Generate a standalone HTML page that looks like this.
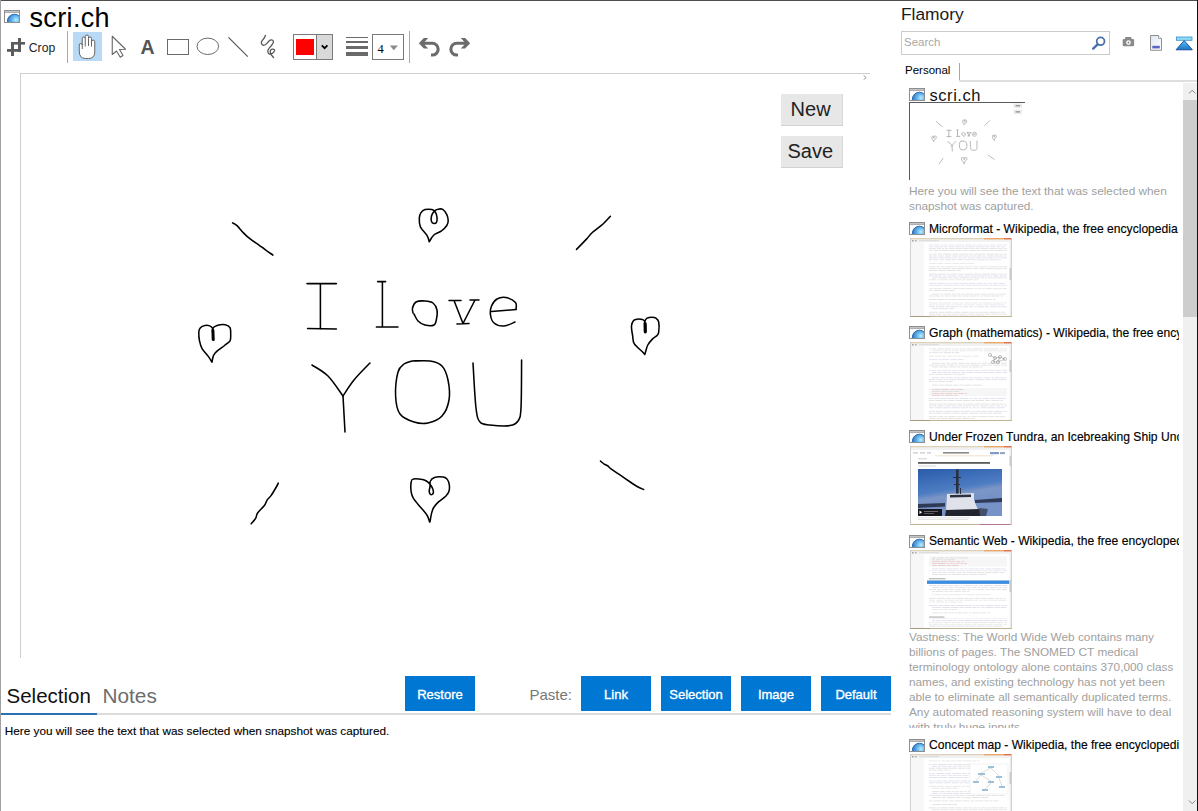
<!DOCTYPE html>
<html><head><meta charset="utf-8">
<style>
html,body{margin:0;padding:0;background:#fff;}
body{width:1198px;height:811px;position:relative;overflow:hidden;font-family:"Liberation Sans",sans-serif;}
.a{position:absolute;}
.t{position:absolute;white-space:nowrap;line-height:1;}
svg{position:absolute;overflow:visible;}
.btn{position:absolute;background:#0077d3;color:#fff;font-weight:normal;font-size:13px;-webkit-text-stroke:0.35px #fff;text-align:center;width:70px;height:35px;line-height:37px;top:676px;box-sizing:border-box;}
.ttl{position:absolute;white-space:nowrap;line-height:1;font-size:12.1px;color:#000;-webkit-text-stroke:0.15px #000;}
.desc{position:absolute;white-space:nowrap;font-size:11.8px;line-height:15px;color:#a0a0a0;}
</style></head><body>

<!-- window borders -->
<div class="a" style="left:0;top:0;width:1198px;height:1px;background:#4e4e4e"></div>
<div class="a" style="left:0;top:0;width:1px;height:811px;background:#a0a0a0"></div>
<div class="a" style="left:1197px;top:0;width:1px;height:811px;background:#111"></div>

<!-- LEFT PANE -->
<div id="left">

<svg width="0" height="0" style="position:absolute">
 <defs>
  <radialGradient id="gg" cx="0.6" cy="0.4" r="0.65">
   <stop offset="0" stop-color="#b8ecff"/><stop offset="0.45" stop-color="#5fb2ec"/><stop offset="1" stop-color="#2a6fc0"/>
  </radialGradient>
  <clipPath id="gclip"><rect x="1" y="3" width="14" height="9"/></clipPath>
  <symbol id="globe" viewBox="0 0 16 13">
   <rect x="0" y="0" width="16" height="13" fill="#fff"/>
   <rect x="0" y="0" width="16" height="3" fill="#a9a9a9"/>
   <rect x="1" y="1" width="14" height="1.2" fill="#c4c4c4"/>
   <g clip-path="url(#gclip)"><circle cx="10.5" cy="11.3" r="7.1" fill="url(#gg)" stroke="#1e5fa6" stroke-width="0.9"/></g>
   <rect x="0.5" y="0.5" width="15" height="12" fill="none" stroke="#8e8e8e" stroke-width="1"/>
  </symbol>
 </defs>
</svg>

<!-- title -->
<svg style="left:4px;top:10px" width="16" height="13"><use href="#globe"/></svg>
<div class="t" style="left:29.5px;top:4.8px;font-size:27px;letter-spacing:0.35px;color:#000">scri.ch</div>

<!-- toolbar -->
<svg style="left:0;top:0" width="1" height="1">
 <g fill="#5c5c5c">
  <rect x="18" y="38" width="3" height="14"/>
  <rect x="11" y="42" width="14" height="2.6"/>
  <rect x="11" y="42" width="3" height="14"/>
  <rect x="7" y="49" width="14" height="2.8"/>
 </g>
</svg>
<div class="t" style="left:28.8px;top:42.3px;font-size:12.2px;color:#222">Crop</div>
<div class="a" style="left:67px;top:31px;width:1px;height:32px;background:#a9a9ad"></div>
<div class="a" style="left:73px;top:32px;width:29px;height:29px;background:#b9daf7"></div>
<svg style="left:73px;top:32px" width="29" height="29">
 <path d="M6.25 19 L6.25 13 A1.5 1.5 0 0 1 9.25 13 L9.25 6.5 A1.5 1.5 0 0 1 12.25 6.5 L12.25 4.6 A1.625 1.625 0 0 1 15.5 4.6 L15.5 6.5 A1.5 1.5 0 0 1 18.5 6.5 L18.5 9.75 A1.625 1.625 0 0 1 21.75 9.75 L21.75 20 Q21.75 26.5 15.5 26.5 L12.5 26.5 Q6.25 26.5 6.25 19 Z" fill="#fff" stroke="#666" stroke-width="1"/>
 <path d="M9.25 12.5 V17 M12.25 6.5 V14.5 M15.5 6.5 V14 M18.5 9.75 V14.5" stroke="#666" stroke-width="1" fill="none"/>
</svg>
<svg style="left:0;top:0" width="1" height="1">
 <path d="M112.25 36.25 L112.25 54.5 L116.5 51 L120.25 57.25 L123 55.5 L119.5 49.5 L125.5 49.25 Z" fill="#fff" stroke="#666" stroke-width="1.1" stroke-linejoin="round"/>
</svg>
<div class="t" style="left:140.5px;top:37.6px;font-size:19.5px;font-weight:bold;color:#555">A</div>
<svg style="left:0;top:0" width="1" height="1">
 <rect x="167.5" y="39.5" width="21" height="15" fill="none" stroke="#6a6a6a" stroke-width="1"/>
 <ellipse cx="207.8" cy="46.3" rx="10.8" ry="8.2" fill="none" stroke="#6a6a6a" stroke-width="1"/>
 <path d="M228.5 37.3 L247.8 56.7" stroke="#555" stroke-width="1.2"/>
 <path d="M265.4 35.3 C265 37.5 262.5 40 261.8 41.2 C260.8 43 261.5 44.8 263.5 45.3 C265.3 45.6 266.5 44.2 269.1 40.9 C270.5 39.6 272.6 39.6 273.4 41.3 C274 42.6 273 44 269.4 47.9 C267.5 50 267.3 52.6 268.8 53.7 C270.5 54.9 273.6 53.2 274.6 50.8 C275 49.4 273.2 48.8 271.6 49.4 C269.8 50.2 269.8 52.5 271.3 54.8 L273.5 57.5" fill="none" stroke="#555" stroke-width="1.3" stroke-linecap="round"/>
</svg>
<!-- color picker -->
<div class="a" style="left:293px;top:34px;width:38px;height:24px;border:1px solid #7a7a7a;background:#fff"></div>
<div class="a" style="left:296px;top:39px;width:18px;height:16px;background:#f00"></div>
<div class="a" style="left:316px;top:35px;width:15px;height:24px;background:#d9d9d9;border-left:1px solid #7a7a7a"></div>
<svg style="left:0;top:0" width="1" height="1">
 <path d="M321.8 45.3 L324.6 48.2 L327.4 45.3" fill="none" stroke="#000" stroke-width="1.8"/>
</svg>
<!-- line width -->
<svg style="left:0;top:0" width="1" height="1">
 <g fill="#6a6a6a">
  <rect x="346" y="37" width="22" height="1"/>
  <rect x="346" y="41" width="22" height="2"/>
  <rect x="346" y="46" width="22" height="3"/>
  <rect x="346" y="52" width="22" height="4"/>
 </g>
</svg>
<div class="a" style="left:372px;top:34px;width:30px;height:24px;border:1px solid #7a7a7a;background:#fff"></div>
<div class="t" style="left:377.5px;top:42.5px;font-size:12.5px;font-family:'Liberation Serif',serif;color:#000">4</div>
<svg style="left:0;top:0" width="1" height="1">
 <path d="M389.8 45.5 L397.9 45.5 L393.85 50.2 Z" fill="#8a8a8a"/>
</svg>
<div class="a" style="left:409px;top:31px;width:1px;height:32px;background:#a9a9ad"></div>
<!-- undo / redo -->
<svg style="left:0;top:0" width="1" height="1">
 <g fill="none" stroke="#6b6b6b" stroke-width="3.1">
  <path d="M423.5 43.3 L432.3 43.3 A5.85 5.85 0 0 1 432.3 55 L431 55"/>
  <path d="M465.5 43.3 L456.7 43.3 A5.85 5.85 0 0 0 456.7 55 L458 55"/>
 </g>
 <g fill="#6b6b6b">
  <path d="M418.8 43.3 L423.9 38.1 L428.2 38.1 L424.6 41.9 L424.6 44.7 L428.2 48.6 L423.9 48.6 Z"/>
  <path d="M470.2 43.3 L465.1 38.1 L460.8 38.1 L464.4 41.9 L464.4 44.7 L460.8 48.6 L465.1 48.6 Z"/>
 </g>
</svg>

<!-- canvas frame -->
<div class="a" style="left:20px;top:73px;width:850px;height:1px;background:#cfcfcf"></div>
<div class="a" style="left:20px;top:73px;width:1px;height:585px;background:#cfcfcf"></div>
<svg style="left:0;top:0" width="1" height="1"><path d="M863.6 75.5 L866.2 77.6 L863.6 79.7" fill="none" stroke="#9a9a9a" stroke-width="1"/></svg>

<div class="a" style="left:781px;top:93.5px;width:62px;height:32px;background:#e7e7e7;border-bottom:1px solid #d2d2d2;border-right:1px solid #d8d8d8;box-sizing:border-box"></div>
<div class="t" style="left:790.6px;top:98.5px;font-size:20px;color:#222">New</div>
<div class="a" style="left:781px;top:135.5px;width:62px;height:32px;background:#e7e7e7;border-bottom:1px solid #d2d2d2;border-right:1px solid #d8d8d8;box-sizing:border-box"></div>
<div class="t" style="left:787.5px;top:141.2px;font-size:20px;color:#222">Save</div>

<svg style="left:0;top:0" width="1" height="1"><g stroke="#000" stroke-width="1.55"><g id="drw" fill="none" stroke-linecap="round" stroke-linejoin="round">
<path d="M232.6 222.9 C233.3 223.3 235.2 223.9 237.0 225.6 C238.8 227.3 241.4 230.8 243.7 233.1 C245.9 235.4 247.9 237.2 250.5 239.2 C253.1 241.2 256.9 243.6 259.3 245.3 C261.7 247.0 262.5 247.7 264.8 249.3 C267.1 250.9 271.5 254.1 272.9 255.1"/>
<path d="M576.5 249.4 C578.2 247.7 584.1 241.7 586.7 238.9 C589.3 236.1 589.4 235.3 592.1 232.8 C594.8 230.3 600.0 226.8 603.0 224.0 C606.0 221.2 609.2 217.5 610.4 216.2"/>
<path d="M251.2 523.8 C251.9 522.9 254.5 520.2 255.6 518.4 C256.7 516.6 256.1 515.1 257.6 513.0 C259.1 510.9 262.8 507.6 264.4 505.5 C266.0 503.4 266.0 501.8 267.1 500.1 C268.2 498.4 269.6 497.7 271.2 495.4 C272.8 493.1 275.4 488.6 276.6 486.5 C277.8 484.4 278.0 483.7 278.3 483.1"/>
<path d="M600.5 461.1 C601.1 461.6 603.0 463.4 604.2 464.2 C605.4 465.0 606.8 465.2 607.9 466.0 C609.0 466.8 609.0 467.4 611.0 468.8 C613.0 470.2 616.5 472.6 619.6 474.7 C622.7 476.8 626.4 479.4 629.5 481.5 C632.6 483.6 635.7 485.7 638.1 487.0 C640.5 488.3 642.8 489.1 643.7 489.5"/>
<path d="M429.2 241.8 C428.9 240.8 428.6 238.2 427.1 235.7 C425.6 233.2 421.7 229.8 420.4 226.9 C419.1 224.0 419.2 220.5 419.3 218.1 C419.4 215.7 420.0 214.0 421.0 212.6 C422.0 211.2 423.3 210.1 425.1 209.6 C426.9 209.1 430.2 209.2 431.9 209.6 C433.6 210.0 434.4 210.7 435.3 212.0 C436.2 213.3 436.8 215.7 437.0 217.4 C437.2 219.1 437.1 221.1 436.6 222.1 C436.1 223.1 434.8 223.6 433.9 223.5 C433.0 223.4 431.9 222.8 431.5 221.5 C431.1 220.2 431.0 217.8 431.5 216.0 C432.0 214.2 433.5 212.0 434.6 210.9 C435.7 209.8 436.6 209.4 438.0 209.2 C439.4 208.9 441.2 208.5 442.7 209.4 C444.2 210.3 445.9 212.8 446.8 214.7 C447.7 216.6 448.2 219.0 448.2 220.8 C448.2 222.6 447.9 223.8 446.8 225.5 C445.7 227.2 443.5 229.4 441.4 231.0 C439.2 232.6 435.9 233.2 433.9 235.0 C431.9 236.8 430.0 240.7 429.2 241.8"/>
<path d="M212.0 362.2 C211.4 361.2 209.9 358.6 208.3 356.4 C206.7 354.2 203.7 351.5 202.2 348.9 C200.7 346.3 200.1 343.6 199.5 340.8 C198.9 338.0 198.7 334.1 198.8 332.0 C198.9 329.9 199.2 329.0 200.2 327.9 C201.2 326.8 203.3 325.8 204.9 325.5 C206.5 325.2 208.4 325.4 209.7 325.9 C211.0 326.4 212.1 327.2 212.7 328.6 C213.3 330.0 213.0 332.1 213.1 334.0 C213.2 335.9 213.4 340.1 213.4 340.1 C213.4 340.1 213.0 335.9 212.9 334.0 C212.8 332.1 212.0 330.0 212.7 328.6 C213.4 327.2 215.0 326.1 217.1 325.5 C219.2 324.9 223.2 324.4 225.3 324.8 C227.5 325.2 229.1 326.0 230.0 327.6 C230.9 329.2 230.7 332.5 230.7 334.7 C230.7 336.9 231.0 339.0 230.0 340.8 C229.0 342.6 226.8 343.7 224.6 345.5 C222.3 347.3 218.4 349.9 216.5 351.6 C214.6 353.3 214.2 353.9 213.4 355.7 C212.7 357.5 212.2 361.1 212.0 362.2"/>
<path d="M644.8 354.5 C644.4 354.1 644.2 353.6 642.4 351.8 C640.6 350.0 635.8 346.4 634.2 343.7 C632.6 341.0 633.1 338.4 632.6 335.5 C632.1 332.6 631.3 328.5 631.5 326.0 C631.7 323.5 632.7 321.7 633.6 320.6 C634.5 319.5 635.5 319.4 637.0 319.2 C638.5 319.0 641.1 319.2 642.4 319.6 C643.7 320.0 644.3 320.6 644.8 321.6 C645.3 322.6 645.3 323.6 645.4 325.4 C645.5 327.1 645.2 332.1 645.1 332.1 C645.0 332.1 645.0 327.1 644.9 325.4 C644.8 323.6 644.4 322.8 644.8 321.6 C645.2 320.4 645.9 318.9 647.1 318.2 C648.3 317.5 650.4 317.2 651.9 317.2 C653.4 317.2 654.9 317.4 656.0 318.2 C657.1 319.0 658.2 319.7 658.7 322.0 C659.2 324.3 659.0 329.9 658.7 332.1 C658.4 334.4 658.0 334.4 657.0 335.5 C656.0 336.6 654.1 337.3 652.6 338.9 C651.1 340.5 648.9 343.0 647.8 345.0 C646.7 347.0 646.3 349.5 645.8 351.1 C645.3 352.7 645.0 353.9 644.8 354.5"/>
<path d="M429.6 521.9 C429.2 520.8 428.7 517.9 427.2 515.5 C425.7 513.1 423.1 510.3 420.8 507.5 C418.5 504.7 415.2 501.2 413.6 498.7 C412.0 496.1 411.6 495.0 411.2 492.2 C410.8 489.4 410.8 484.0 411.2 481.8 C411.6 479.6 411.7 479.4 413.6 479.0 C415.5 478.6 420.3 479.1 422.4 479.4 C424.5 479.7 425.1 480.2 426.4 481.0 C427.7 481.8 429.0 483.0 430.0 484.2 C431.0 485.4 431.9 486.7 432.5 488.2 C433.1 489.7 433.6 491.9 433.3 493.0 C433.0 494.1 431.5 494.9 430.8 494.6 C430.1 494.3 429.3 492.7 429.2 491.4 C429.1 490.1 429.8 488.3 430.0 486.6 C430.2 484.9 429.6 482.5 430.4 481.0 C431.1 479.5 432.4 478.1 434.5 477.4 C436.6 476.7 441.2 476.7 443.3 477.0 C445.4 477.3 446.3 478.1 447.3 479.4 C448.3 480.7 449.0 483.0 449.3 485.0 C449.6 487.0 449.5 489.5 448.9 491.4 C448.3 493.3 447.4 494.4 445.7 496.2 C444.0 497.9 440.5 500.0 438.5 501.9 C436.5 503.8 434.8 505.6 433.7 507.5 C432.6 509.4 432.2 510.7 431.6 513.1 C431.0 515.5 430.3 520.4 430.0 521.9"/>
<path d="M413.0 313.0 C412.9 312.2 412.0 309.8 412.5 308.0 C413.0 306.2 413.9 303.2 416.0 302.0 C418.1 300.8 422.2 300.8 425.0 301.0 C427.8 301.2 431.0 301.5 433.0 303.0 C435.0 304.5 436.4 307.3 437.0 310.0 C437.6 312.7 437.0 316.5 436.5 319.0 C436.0 321.5 435.9 324.0 434.0 325.0 C432.1 326.0 427.7 325.7 425.0 325.0 C422.3 324.3 419.8 322.8 418.0 321.0 C416.2 319.2 414.7 315.2 414.0 314.0"/>
<path d="M516.0 309.5 C515.9 308.3 517.2 304.5 515.5 302.5 C513.8 300.5 509.1 298.1 506.0 297.5 C502.9 296.9 499.4 297.6 497.0 299.0 C494.6 300.4 492.6 303.3 491.5 306.0 C490.4 308.7 490.1 312.2 490.5 315.0 C490.9 317.8 491.8 321.2 494.0 323.0 C496.2 324.8 500.5 326.2 504.0 326.0 C507.5 325.8 513.2 322.7 515.0 322.0"/>
<path d="M312.0 365.0 C314.7 366.8 322.8 370.8 328.0 376.0 C333.2 381.2 340.5 392.7 343.0 396.0"/>
<path d="M370.0 363.0 C367.3 365.8 358.5 374.5 354.0 380.0 C349.5 385.5 344.8 393.3 343.0 396.0"/>
<path d="M412.0 361.0 C415.0 361.0 425.0 360.2 430.0 361.0 C435.0 361.8 439.0 362.8 442.0 366.0 C445.0 369.2 446.8 374.3 448.0 380.0 C449.2 385.7 450.0 394.0 449.0 400.0 C448.0 406.0 445.5 412.2 442.0 416.0 C438.5 419.8 432.7 422.0 428.0 423.0 C423.3 424.0 418.7 423.5 414.0 422.0 C409.3 420.5 403.1 418.3 400.0 414.0 C396.9 409.7 395.9 403.0 395.6 396.0 C395.3 389.0 396.6 377.3 398.0 372.0 C399.4 366.7 401.7 365.8 404.0 364.0 C406.3 362.2 410.7 361.5 412.0 361.0"/>
<path d="M473.0 363.0 C473.5 370.5 474.8 398.2 476.0 408.0 C477.2 417.8 477.7 419.2 480.0 422.0 C482.3 424.8 485.0 424.4 490.0 425.0 C495.0 425.6 505.3 426.3 510.0 425.6 C514.7 424.9 516.2 423.9 518.0 421.0 C519.8 418.1 520.4 418.2 521.0 408.0 C521.6 397.8 521.5 368.0 521.6 360.0"/>
<path d="M343 396 L345 432"/>
<path d="M212.9 330.5 L213.2 339.5" stroke-width="3"/>
<path d="M645.1 323.5 L645.3 331.8" stroke-width="3.2"/>
<path d="M491.5 311.5 L516 309.5"/>
<path d="M307 283.6 L336.4 283.6 M320.4 283.6 L320.4 329 M307.6 328.5 L336.4 329"/>
<path d="M377.6 281.6 L385.6 281.6 M382.4 281.6 L382.4 327 M376.4 327 L398 327"/>
<path d="M449 300.5 L461 300.5 M470 300 L479 300 M454 300.5 L463 323.5 L475 300 M457 324 L469 323.5"/>
</g></g></svg>

<!-- bottom tabs -->
<div class="t" style="left:6.5px;top:686px;font-size:20.5px;color:#111">Selection</div>
<div class="t" style="left:102.5px;top:685.6px;font-size:20.8px;color:#6d6d6d">Notes</div>
<div class="a" style="left:1px;top:713px;width:890px;height:2px;background:#dcdcdc"></div>
<div class="a" style="left:1px;top:713px;width:96px;height:2px;background:#2b72b4"></div>
<div class="btn" style="left:405px">Restore</div>
<div class="t" style="left:529.5px;top:686.5px;font-size:15px;color:#777">Paste:</div>
<div class="btn" style="left:581px">Link</div>
<div class="btn" style="left:661px">Selection</div>
<div class="btn" style="left:741px">Image</div>
<div class="btn" style="left:821px">Default</div>
<div class="t" style="left:4.8px;top:724.6px;font-size:11.78px;color:#000;-webkit-text-stroke:0.12px #000">Here you will see the text that was selected when snapshot was captured.</div>

</div>

<!-- RIGHT PANE -->
<div id="right">
<div class="t" style="left:900.9px;top:6px;font-size:17.4px;color:#1a1a1a">Flamory</div>
<div class="a" style="left:901px;top:31px;width:209px;height:24px;border:1px solid #cbcbcb;box-sizing:border-box"></div>
<div class="t" style="left:904px;top:36.8px;font-size:11.5px;color:#a8a8a8">Search</div>
<svg style="left:0;top:0" width="1" height="1">
 <circle cx="1100.6" cy="41.3" r="3.9" fill="none" stroke="#4a70ad" stroke-width="1.8"/>
 <path d="M1097.6 44.4 L1093.2 48.6" stroke="#4a70ad" stroke-width="2.4" stroke-linecap="round"/>
 <g fill="#8a8a8a">
  <rect x="1122.7" y="39" width="11.4" height="7.2" rx="1.2"/>
  <rect x="1125" y="37" width="6.5" height="3" rx="0.8"/>
 </g>
 <circle cx="1128.5" cy="42.6" r="2.3" fill="#fff"/>
 <path d="M1127.3 42.6 H1129.7 M1128.5 41.4 V43.8" stroke="#8a8a8a" stroke-width="0.8"/>
 <defs><linearGradient id="dg" x1="0" y1="0" x2="1" y2="1"><stop offset="0" stop-color="#dfe6ee"/><stop offset="1" stop-color="#ffffff"/></linearGradient>
 <linearGradient id="tg" x1="0" y1="0" x2="0" y2="1"><stop offset="0" stop-color="#5cc0f2"/><stop offset="1" stop-color="#1a74c8"/></linearGradient></defs>
 <path d="M1150.5 35.5 H1158.5 L1161.5 38.5 V50.3 H1150.5 Z" fill="url(#dg)" stroke="#8f8f8f" stroke-width="1"/>
 <path d="M1158.5 35.5 V38.5 H1161.5" fill="#fff" stroke="#8f8f8f" stroke-width="0.8"/>
 <rect x="1152.3" y="45.8" width="7.5" height="2.6" fill="#5a64c4"/>
 <rect x="1176.5" y="37" width="15.5" height="3.3" fill="#8fdaf5" stroke="#3a8fd0" stroke-width="0.8"/>
 <path d="M1184.2 40.6 L1192.3 49.8 L1176 49.8 Z" fill="url(#tg)" stroke="#10489a" stroke-width="0.9" stroke-linejoin="round"/>
</svg>
<div class="t" style="left:905px;top:64.9px;font-size:11.5px;color:#000">Personal</div>
<div class="a" style="left:959px;top:63px;width:1px;height:18px;background:#a8a8a8"></div>
<div class="a" style="left:959px;top:80px;width:238px;height:2px;background:#dedede"></div>
<div class="a" style="left:1183px;top:83px;width:14px;height:728px;background:#f0f0f0"></div>
<div class="a" style="left:1183px;top:100px;width:14px;height:217px;background:#cdcdcd"></div>
<svg style="left:0;top:0" width="1" height="1">
 <path d="M1189 93.5 L1192.2 90.2 L1195.4 93.5" fill="none" stroke="#8a8a8a" stroke-width="1"/>
 <path d="M1189 800.5 L1192.2 803.8 L1195.4 800.5" fill="none" stroke="#8a8a8a" stroke-width="1"/>
</svg>
<div class="a" style="left:895px;top:83px;width:284px;height:728px;overflow:hidden"><div class="a" style="left:-895px;top:-83px;width:1198px;height:811px"><svg style="left:909px;top:88px" width="16" height="13"><use href="#globe"/></svg>
<div class="t" style="left:929.5px;top:86.8px;font-size:16.5px;letter-spacing:0.55px;color:#111">scri.ch</div>
<div class="a" style="left:909px;top:102px;width:116px;height:1px;background:#5a5a5a"></div>
<div class="a" style="left:909px;top:102px;width:1px;height:78px;background:#5a5a5a"></div>
<svg style="left:0;top:0" width="1" height="1">
 <g transform="translate(904 90.6) scale(0.14)"><use href="#drw" stroke="#adadad" stroke-width="6.5"/></g>
 <rect x="1013.5" y="103.5" width="8.5" height="4.5" fill="#ececec"/><rect x="1013.5" y="109.6" width="8.5" height="4.5" fill="#ececec"/>
 <path d="M1015.5 105.8 H1020 M1015.5 111.9 H1020" stroke="#777" stroke-width="1"/>
</svg>
<div class="desc" style="left:909px;top:184.2px">Here you will see the text that was selected when<br>snapshot was captured.</div>
<svg style="left:909px;top:222px" width="16" height="13"><use href="#globe"/></svg>
<div class="ttl" style="left:929px;top:222.6px">Microformat - Wikipedia, the free encyclopedia</div>
<svg style="left:909px;top:326px" width="16" height="13"><use href="#globe"/></svg>
<div class="ttl" style="left:929px;top:326.6px">Graph (mathematics) - Wikipedia, the free encyclopedia</div>
<svg style="left:909px;top:430px" width="16" height="13"><use href="#globe"/></svg>
<div class="ttl" style="left:929px;top:430.6px">Under Frozen Tundra, an Icebreaking Ship Uncovers its Makers</div>
<svg style="left:909px;top:534.5px" width="16" height="13"><use href="#globe"/></svg>
<div class="ttl" style="left:929px;top:535.1px">Semantic Web - Wikipedia, the free encyclopedia</div>
<svg style="left:909px;top:738.6px" width="16" height="13"><use href="#globe"/></svg>
<div class="ttl" style="left:929px;top:739.2px">Concept map - Wikipedia, the free encyclopedia</div>
<svg style="left:910px;top:237.5px" width="102" height="79" viewBox="0 0 102 79"><rect x="0" y="0" width="102" height="79" fill="#ffffff"/><rect x="0" y="0" width="102" height="1.6" fill="#dcd2bc"/><rect x="74" y="0" width="28" height="1.6" fill="#eaa868"/><rect x="94" y="0" width="8" height="1.6" fill="#e07050"/><rect x="0" y="1.6" width="102" height="2.4" fill="#f1f1f1"/><rect x="2" y="2.2" width="1.5" height="1.2" fill="#888"/><rect x="5" y="2.2" width="1.5" height="1.2" fill="#999"/><rect x="9" y="2.5" width="20" height="0.6" fill="#ccc"/><rect x="0" y="4" width="14" height="75" fill="#f7f7f7"/><rect x="19.0" y="6.5" width="3.3" height="0.8" fill="#e3e3e3"/><rect x="23.2" y="6.5" width="6.4" height="0.8" fill="#e3e3e3"/><rect x="30.7" y="6.5" width="2.7" height="0.8" fill="#e3e3e3"/><rect x="34.1" y="6.5" width="2.6" height="0.8" fill="#e3e3e3"/><rect x="37.8" y="6.5" width="6.9" height="0.8" fill="#e3e3e3"/><rect x="45.3" y="6.5" width="8.9" height="0.8" fill="#e3e3e3"/><rect x="55.4" y="6.5" width="6.6" height="0.8" fill="#e3e3e3"/><rect x="62.9" y="6.5" width="3.1" height="0.8" fill="#e3e3e3"/><rect x="66.6" y="6.5" width="5.7" height="0.8" fill="#e3e3e3"/><rect x="73.0" y="6.5" width="3.3" height="0.8" fill="#e3e3e3"/><rect x="77.0" y="6.5" width="2.2" height="0.8" fill="#e3e3e3"/><rect x="80.1" y="6.5" width="5.1" height="0.8" fill="#e3e3e3"/><rect x="86.3" y="6.5" width="5.6" height="0.8" fill="#e3e3e3"/><rect x="92.9" y="6.5" width="4.1" height="0.8" fill="#e3e3e3"/><rect x="19.0" y="8.4" width="4.8" height="0.8" fill="#d9ddec"/><rect x="24.8" y="8.4" width="8.5" height="0.8" fill="#d9ddec"/><rect x="33.9" y="8.4" width="3.8" height="0.8" fill="#d9ddec"/><rect x="38.8" y="8.4" width="5.6" height="0.8" fill="#d9ddec"/><rect x="45.0" y="8.4" width="5.9" height="0.8" fill="#d9ddec"/><rect x="51.6" y="8.4" width="2.8" height="0.8" fill="#d9ddec"/><rect x="55.1" y="8.4" width="2.5" height="0.8" fill="#d9ddec"/><rect x="58.2" y="8.4" width="6.8" height="0.8" fill="#d9ddec"/><rect x="65.7" y="8.4" width="8.5" height="0.8" fill="#d9ddec"/><rect x="74.8" y="8.4" width="4.6" height="0.8" fill="#d9ddec"/><rect x="80.5" y="8.4" width="4.9" height="0.8" fill="#d9ddec"/><rect x="86.4" y="8.4" width="3.4" height="0.8" fill="#d9ddec"/><rect x="90.8" y="8.4" width="4.4" height="0.8" fill="#d9ddec"/><rect x="19.0" y="10.3" width="7.3" height="0.8" fill="#dcdcdc"/><rect x="27.0" y="10.3" width="3.7" height="0.8" fill="#dcdcdc"/><rect x="31.4" y="10.3" width="2.4" height="0.8" fill="#dcdcdc"/><rect x="34.9" y="10.3" width="3.2" height="0.8" fill="#dcdcdc"/><rect x="39.0" y="10.3" width="5.1" height="0.8" fill="#dcdcdc"/><rect x="44.9" y="10.3" width="7.1" height="0.8" fill="#dcdcdc"/><rect x="52.7" y="10.3" width="6.5" height="0.8" fill="#dcdcdc"/><rect x="59.9" y="10.3" width="4.9" height="0.8" fill="#dcdcdc"/><rect x="65.5" y="10.3" width="3.9" height="0.8" fill="#dcdcdc"/><rect x="70.6" y="10.3" width="7.6" height="0.8" fill="#dcdcdc"/><rect x="79.0" y="10.3" width="8.2" height="0.8" fill="#dcdcdc"/><rect x="87.9" y="10.3" width="4.8" height="0.8" fill="#dcdcdc"/><rect x="93.8" y="10.3" width="3.2" height="0.8" fill="#dcdcdc"/><rect x="19.0" y="12.2" width="3.8" height="0.8" fill="#dcdcdc"/><rect x="23.9" y="12.2" width="4.3" height="0.8" fill="#dcdcdc"/><rect x="29.0" y="12.2" width="2.5" height="0.8" fill="#dcdcdc"/><rect x="32.1" y="12.2" width="6.1" height="0.8" fill="#dcdcdc"/><rect x="38.9" y="12.2" width="6.2" height="0.8" fill="#dcdcdc"/><rect x="46.0" y="12.2" width="5.2" height="0.8" fill="#dcdcdc"/><rect x="52.3" y="12.2" width="5.4" height="0.8" fill="#dcdcdc"/><rect x="58.7" y="12.2" width="8.1" height="0.8" fill="#dcdcdc"/><rect x="67.4" y="12.2" width="3.1" height="0.8" fill="#dcdcdc"/><rect x="71.7" y="12.2" width="7.7" height="0.8" fill="#dcdcdc"/><rect x="80.1" y="12.2" width="3.3" height="0.8" fill="#dcdcdc"/><rect x="84.5" y="12.2" width="8.6" height="0.8" fill="#dcdcdc"/><rect x="93.8" y="12.2" width="2.6" height="0.8" fill="#dcdcdc"/><rect x="19.0" y="15.7" width="2.8" height="0.8" fill="#dedede"/><rect x="22.7" y="15.7" width="3.8" height="0.8" fill="#dedede"/><rect x="27.5" y="15.7" width="4.7" height="0.8" fill="#dedede"/><rect x="33.1" y="15.7" width="8.3" height="0.8" fill="#dedede"/><rect x="42.3" y="15.7" width="5.6" height="0.8" fill="#dedede"/><rect x="49.1" y="15.7" width="8.8" height="0.8" fill="#dedede"/><rect x="58.6" y="15.7" width="5.4" height="0.8" fill="#dedede"/><rect x="65.0" y="15.7" width="6.3" height="0.8" fill="#dedede"/><rect x="71.9" y="15.7" width="3.5" height="0.8" fill="#dedede"/><rect x="76.6" y="15.7" width="7.2" height="0.8" fill="#dedede"/><rect x="84.5" y="15.7" width="4.9" height="0.8" fill="#dedede"/><rect x="90.1" y="15.7" width="2.3" height="0.8" fill="#dedede"/><rect x="93.2" y="15.7" width="3.8" height="0.8" fill="#dedede"/><rect x="19.0" y="17.6" width="3.0" height="0.8" fill="#d9ddec"/><rect x="22.8" y="17.6" width="4.3" height="0.8" fill="#d9ddec"/><rect x="28.2" y="17.6" width="5.7" height="0.8" fill="#d9ddec"/><rect x="35.0" y="17.6" width="6.1" height="0.8" fill="#d9ddec"/><rect x="42.3" y="17.6" width="5.3" height="0.8" fill="#d9ddec"/><rect x="48.4" y="17.6" width="4.2" height="0.8" fill="#d9ddec"/><rect x="53.2" y="17.6" width="6.2" height="0.8" fill="#d9ddec"/><rect x="60.1" y="17.6" width="2.5" height="0.8" fill="#d9ddec"/><rect x="63.3" y="17.6" width="3.0" height="0.8" fill="#d9ddec"/><rect x="66.9" y="17.6" width="5.2" height="0.8" fill="#d9ddec"/><rect x="72.9" y="17.6" width="2.3" height="0.8" fill="#d9ddec"/><rect x="76.4" y="17.6" width="7.2" height="0.8" fill="#d9ddec"/><rect x="84.2" y="17.6" width="8.7" height="0.8" fill="#d9ddec"/><rect x="93.8" y="17.6" width="2.6" height="0.8" fill="#d9ddec"/><rect x="19.0" y="19.5" width="8.6" height="0.8" fill="#dcdcdc"/><rect x="28.2" y="19.5" width="5.5" height="0.8" fill="#dcdcdc"/><rect x="34.3" y="19.5" width="6.6" height="0.8" fill="#dcdcdc"/><rect x="41.8" y="19.5" width="2.1" height="0.8" fill="#dcdcdc"/><rect x="44.5" y="19.5" width="2.6" height="0.8" fill="#dcdcdc"/><rect x="47.8" y="19.5" width="3.8" height="0.8" fill="#dcdcdc"/><rect x="52.5" y="19.5" width="4.3" height="0.8" fill="#dcdcdc"/><rect x="58.0" y="19.5" width="6.9" height="0.8" fill="#dcdcdc"/><rect x="65.7" y="19.5" width="5.2" height="0.8" fill="#dcdcdc"/><rect x="71.9" y="19.5" width="5.6" height="0.8" fill="#dcdcdc"/><rect x="78.4" y="19.5" width="4.2" height="0.8" fill="#dcdcdc"/><rect x="83.2" y="19.5" width="2.2" height="0.8" fill="#dcdcdc"/><rect x="86.5" y="19.5" width="2.8" height="0.8" fill="#dcdcdc"/><rect x="90.4" y="19.5" width="6.6" height="0.8" fill="#dcdcdc"/><rect x="19.0" y="21.4" width="3.0" height="0.8" fill="#d9ddec"/><rect x="23.0" y="21.4" width="5.6" height="0.8" fill="#d9ddec"/><rect x="29.7" y="21.4" width="4.4" height="0.8" fill="#d9ddec"/><rect x="35.2" y="21.4" width="5.5" height="0.8" fill="#d9ddec"/><rect x="41.4" y="21.4" width="4.8" height="0.8" fill="#d9ddec"/><rect x="47.0" y="21.4" width="6.4" height="0.8" fill="#d9ddec"/><rect x="54.5" y="21.4" width="7.3" height="0.8" fill="#d9ddec"/><rect x="62.5" y="21.4" width="3.5" height="0.8" fill="#d9ddec"/><rect x="66.8" y="21.4" width="8.4" height="0.8" fill="#d9ddec"/><rect x="75.9" y="21.4" width="2.9" height="0.8" fill="#d9ddec"/><rect x="79.7" y="21.4" width="8.3" height="0.8" fill="#d9ddec"/><rect x="88.6" y="21.4" width="2.4" height="0.8" fill="#d9ddec"/><rect x="19.0" y="24.9" width="7.8" height="0.8" fill="#e3e3e3"/><rect x="27.6" y="24.9" width="5.6" height="0.8" fill="#e3e3e3"/><rect x="34.3" y="24.9" width="7.0" height="0.8" fill="#e3e3e3"/><rect x="42.4" y="24.9" width="6.4" height="0.8" fill="#e3e3e3"/><rect x="49.6" y="24.9" width="7.8" height="0.8" fill="#e3e3e3"/><rect x="58.1" y="24.9" width="6.3" height="0.8" fill="#e3e3e3"/><rect x="19.0" y="28.4" width="6.5" height="0.8" fill="#dedede"/><rect x="26.3" y="28.4" width="3.3" height="0.8" fill="#dedede"/><rect x="30.7" y="28.4" width="3.9" height="0.8" fill="#dedede"/><rect x="35.7" y="28.4" width="7.6" height="0.8" fill="#dedede"/><rect x="44.4" y="28.4" width="2.8" height="0.8" fill="#dedede"/><rect x="47.9" y="28.4" width="5.7" height="0.8" fill="#dedede"/><rect x="54.6" y="28.4" width="4.6" height="0.8" fill="#dedede"/><rect x="59.9" y="28.4" width="3.4" height="0.8" fill="#dedede"/><rect x="64.3" y="28.4" width="3.8" height="0.8" fill="#dedede"/><rect x="69.2" y="28.4" width="7.3" height="0.8" fill="#dedede"/><rect x="77.4" y="28.4" width="2.3" height="0.8" fill="#dedede"/><rect x="80.4" y="28.4" width="7.5" height="0.8" fill="#dedede"/><rect x="88.7" y="28.4" width="8.3" height="0.8" fill="#dedede"/><rect x="19.0" y="30.3" width="7.9" height="0.8" fill="#dcdcdc"/><rect x="28.0" y="30.3" width="3.6" height="0.8" fill="#dcdcdc"/><rect x="32.4" y="30.3" width="8.2" height="0.8" fill="#dcdcdc"/><rect x="41.5" y="30.3" width="5.2" height="0.8" fill="#dcdcdc"/><rect x="47.3" y="30.3" width="8.2" height="0.8" fill="#dcdcdc"/><rect x="56.1" y="30.3" width="5.9" height="0.8" fill="#dcdcdc"/><rect x="63.0" y="30.3" width="5.5" height="0.8" fill="#dcdcdc"/><rect x="69.6" y="30.3" width="4.4" height="0.8" fill="#dcdcdc"/><rect x="74.8" y="30.3" width="8.9" height="0.8" fill="#dcdcdc"/><rect x="84.3" y="30.3" width="8.1" height="0.8" fill="#dcdcdc"/><rect x="93.5" y="30.3" width="3.5" height="0.8" fill="#dcdcdc"/><rect x="19.0" y="32.2" width="8.8" height="0.8" fill="#dedede"/><rect x="28.8" y="32.2" width="7.5" height="0.8" fill="#dedede"/><rect x="37.1" y="32.2" width="8.4" height="0.8" fill="#dedede"/><rect x="46.6" y="32.2" width="4.4" height="0.8" fill="#dedede"/><rect x="19.0" y="35.7" width="8.4" height="0.8" fill="#dcdcdc"/><rect x="28.2" y="35.7" width="8.1" height="0.8" fill="#dcdcdc"/><rect x="37.1" y="35.7" width="2.2" height="0.8" fill="#dcdcdc"/><rect x="40.3" y="35.7" width="6.8" height="0.8" fill="#dcdcdc"/><rect x="48.2" y="35.7" width="5.3" height="0.8" fill="#dcdcdc"/><rect x="54.7" y="35.7" width="8.3" height="0.8" fill="#dcdcdc"/><rect x="63.9" y="35.7" width="6.7" height="0.8" fill="#dcdcdc"/><rect x="71.5" y="35.7" width="8.2" height="0.8" fill="#dcdcdc"/><rect x="80.6" y="35.7" width="6.8" height="0.8" fill="#dcdcdc"/><rect x="88.5" y="35.7" width="5.1" height="0.8" fill="#dcdcdc"/><rect x="94.5" y="35.7" width="2.5" height="0.8" fill="#dcdcdc"/><rect x="19.0" y="37.6" width="4.2" height="0.8" fill="#d9ddec"/><rect x="24.0" y="37.6" width="7.9" height="0.8" fill="#d9ddec"/><rect x="33.1" y="37.6" width="3.5" height="0.8" fill="#d9ddec"/><rect x="37.6" y="37.6" width="8.8" height="0.8" fill="#d9ddec"/><rect x="47.3" y="37.6" width="6.0" height="0.8" fill="#d9ddec"/><rect x="54.1" y="37.6" width="5.8" height="0.8" fill="#d9ddec"/><rect x="60.7" y="37.6" width="6.2" height="0.8" fill="#d9ddec"/><rect x="67.6" y="37.6" width="8.8" height="0.8" fill="#d9ddec"/><rect x="77.3" y="37.6" width="4.8" height="0.8" fill="#d9ddec"/><rect x="83.1" y="37.6" width="5.9" height="0.8" fill="#d9ddec"/><rect x="90.0" y="37.6" width="6.8" height="0.8" fill="#d9ddec"/><rect x="22.0" y="39.5" width="4.9" height="0.8" fill="#dcdcdc"/><rect x="28.1" y="39.5" width="8.5" height="0.8" fill="#dcdcdc"/><rect x="37.3" y="39.5" width="5.3" height="0.8" fill="#dcdcdc"/><rect x="43.3" y="39.5" width="5.0" height="0.8" fill="#dcdcdc"/><rect x="49.4" y="39.5" width="8.3" height="0.8" fill="#dcdcdc"/><rect x="58.6" y="39.5" width="4.2" height="0.8" fill="#dcdcdc"/><rect x="63.5" y="39.5" width="6.3" height="0.8" fill="#dcdcdc"/><rect x="71.0" y="39.5" width="2.9" height="0.8" fill="#dcdcdc"/><rect x="75.0" y="39.5" width="2.2" height="0.8" fill="#dcdcdc"/><rect x="77.9" y="39.5" width="3.6" height="0.8" fill="#dcdcdc"/><rect x="82.5" y="39.5" width="4.3" height="0.8" fill="#dcdcdc"/><rect x="87.5" y="39.5" width="6.3" height="0.8" fill="#dcdcdc"/><rect x="94.5" y="39.5" width="2.5" height="0.8" fill="#dcdcdc"/><rect x="19.0" y="41.4" width="6.9" height="0.8" fill="#e3e3e3"/><rect x="27.0" y="41.4" width="2.2" height="0.8" fill="#e3e3e3"/><rect x="30.2" y="41.4" width="7.8" height="0.8" fill="#e3e3e3"/><rect x="38.9" y="41.4" width="5.8" height="0.8" fill="#e3e3e3"/><rect x="45.8" y="41.4" width="5.7" height="0.8" fill="#e3e3e3"/><rect x="52.3" y="41.4" width="3.5" height="0.8" fill="#e3e3e3"/><rect x="56.7" y="41.4" width="6.1" height="0.8" fill="#e3e3e3"/><rect x="63.5" y="41.4" width="5.1" height="0.8" fill="#e3e3e3"/><rect x="19.0" y="44.9" width="8.2" height="0.8" fill="#d9ddec"/><rect x="28.0" y="44.9" width="7.4" height="0.8" fill="#d9ddec"/><rect x="36.1" y="44.9" width="2.7" height="0.8" fill="#d9ddec"/><rect x="39.9" y="44.9" width="2.9" height="0.8" fill="#d9ddec"/><rect x="43.5" y="44.9" width="4.7" height="0.8" fill="#d9ddec"/><rect x="49.1" y="44.9" width="8.6" height="0.8" fill="#d9ddec"/><rect x="58.6" y="44.9" width="6.9" height="0.8" fill="#d9ddec"/><rect x="66.3" y="44.9" width="6.4" height="0.8" fill="#d9ddec"/><rect x="73.7" y="44.9" width="2.7" height="0.8" fill="#d9ddec"/><rect x="77.3" y="44.9" width="4.5" height="0.8" fill="#d9ddec"/><rect x="82.9" y="44.9" width="4.5" height="0.8" fill="#d9ddec"/><rect x="88.5" y="44.9" width="6.4" height="0.8" fill="#d9ddec"/><rect x="19.0" y="46.8" width="5.4" height="0.8" fill="#dedede"/><rect x="25.0" y="46.8" width="7.3" height="0.8" fill="#dedede"/><rect x="33.3" y="46.8" width="8.3" height="0.8" fill="#dedede"/><rect x="42.5" y="46.8" width="3.3" height="0.8" fill="#dedede"/><rect x="46.5" y="46.8" width="3.2" height="0.8" fill="#dedede"/><rect x="50.4" y="46.8" width="4.0" height="0.8" fill="#dedede"/><rect x="55.4" y="46.8" width="6.1" height="0.8" fill="#dedede"/><rect x="62.1" y="46.8" width="6.8" height="0.8" fill="#dedede"/><rect x="69.6" y="46.8" width="2.7" height="0.8" fill="#dedede"/><rect x="73.1" y="46.8" width="5.0" height="0.8" fill="#dedede"/><rect x="78.9" y="46.8" width="3.5" height="0.8" fill="#dedede"/><rect x="83.2" y="46.8" width="6.4" height="0.8" fill="#dedede"/><rect x="90.2" y="46.8" width="3.4" height="0.8" fill="#dedede"/><rect x="94.5" y="46.8" width="2.5" height="0.8" fill="#dedede"/><rect x="19.0" y="50.3" width="4.3" height="0.8" fill="#dedede"/><rect x="23.9" y="50.3" width="7.9" height="0.8" fill="#dedede"/><rect x="32.9" y="50.3" width="8.4" height="0.8" fill="#dedede"/><rect x="42.5" y="50.3" width="6.0" height="0.8" fill="#dedede"/><rect x="49.2" y="50.3" width="6.1" height="0.8" fill="#dedede"/><rect x="56.1" y="50.3" width="7.3" height="0.8" fill="#dedede"/><rect x="64.2" y="50.3" width="2.8" height="0.8" fill="#dedede"/><rect x="68.0" y="50.3" width="3.1" height="0.8" fill="#dedede"/><rect x="72.3" y="50.3" width="2.9" height="0.8" fill="#dedede"/><rect x="76.0" y="50.3" width="5.8" height="0.8" fill="#dedede"/><rect x="82.6" y="50.3" width="5.0" height="0.8" fill="#dedede"/><rect x="88.4" y="50.3" width="3.4" height="0.8" fill="#dedede"/><rect x="92.5" y="50.3" width="4.5" height="0.8" fill="#dedede"/><rect x="19.0" y="52.2" width="3.6" height="0.8" fill="#dedede"/><rect x="23.8" y="52.2" width="6.7" height="0.8" fill="#dedede"/><rect x="31.3" y="52.2" width="6.6" height="0.8" fill="#dedede"/><rect x="38.8" y="52.2" width="5.7" height="0.8" fill="#dedede"/><rect x="22.0" y="55.7" width="7.3" height="0.8" fill="#dedede"/><rect x="30.5" y="55.7" width="2.2" height="0.8" fill="#dedede"/><rect x="33.6" y="55.7" width="7.2" height="0.8" fill="#dedede"/><rect x="41.6" y="55.7" width="4.8" height="0.8" fill="#dedede"/><rect x="47.0" y="55.7" width="3.4" height="0.8" fill="#dedede"/><rect x="51.2" y="55.7" width="2.7" height="0.8" fill="#dedede"/><rect x="54.6" y="55.7" width="8.3" height="0.8" fill="#dedede"/><rect x="63.9" y="55.7" width="5.6" height="0.8" fill="#dedede"/><rect x="70.7" y="55.7" width="6.0" height="0.8" fill="#dedede"/><rect x="77.8" y="55.7" width="6.5" height="0.8" fill="#dedede"/><rect x="85.4" y="55.7" width="2.5" height="0.8" fill="#dedede"/><rect x="88.9" y="55.7" width="7.3" height="0.8" fill="#dedede"/><rect x="19.0" y="57.6" width="5.3" height="0.8" fill="#dcdcdc"/><rect x="25.0" y="57.6" width="5.5" height="0.8" fill="#dcdcdc"/><rect x="31.4" y="57.6" width="2.4" height="0.8" fill="#dcdcdc"/><rect x="35.0" y="57.6" width="4.9" height="0.8" fill="#dcdcdc"/><rect x="40.9" y="57.6" width="6.2" height="0.8" fill="#dcdcdc"/><rect x="47.9" y="57.6" width="4.0" height="0.8" fill="#dcdcdc"/><rect x="52.9" y="57.6" width="5.9" height="0.8" fill="#dcdcdc"/><rect x="59.6" y="57.6" width="7.0" height="0.8" fill="#dcdcdc"/><rect x="67.4" y="57.6" width="2.1" height="0.8" fill="#dcdcdc"/><rect x="70.2" y="57.6" width="2.3" height="0.8" fill="#dcdcdc"/><rect x="73.2" y="57.6" width="7.3" height="0.8" fill="#dcdcdc"/><rect x="81.3" y="57.6" width="8.3" height="0.8" fill="#dcdcdc"/><rect x="90.6" y="57.6" width="2.3" height="0.8" fill="#dcdcdc"/><rect x="19.0" y="61.1" width="7.0" height="0.8" fill="#dcdcdc"/><rect x="26.8" y="61.1" width="7.3" height="0.8" fill="#dcdcdc"/><rect x="34.7" y="61.1" width="2.7" height="0.8" fill="#dcdcdc"/><rect x="38.5" y="61.1" width="8.4" height="0.8" fill="#dcdcdc"/><rect x="47.5" y="61.1" width="8.7" height="0.8" fill="#dcdcdc"/><rect x="57.0" y="61.1" width="6.9" height="0.8" fill="#dcdcdc"/><rect x="64.6" y="61.1" width="4.9" height="0.8" fill="#dcdcdc"/><rect x="70.2" y="61.1" width="8.0" height="0.8" fill="#dcdcdc"/><rect x="79.0" y="61.1" width="3.1" height="0.8" fill="#dcdcdc"/><rect x="82.9" y="61.1" width="2.4" height="0.8" fill="#dcdcdc"/><rect x="19.0" y="64.6" width="8.7" height="0.8" fill="#e3e3e3"/><rect x="28.7" y="64.6" width="3.7" height="0.8" fill="#e3e3e3"/><rect x="33.0" y="64.6" width="8.2" height="0.8" fill="#e3e3e3"/><rect x="42.4" y="64.6" width="6.4" height="0.8" fill="#e3e3e3"/><rect x="49.6" y="64.6" width="3.9" height="0.8" fill="#e3e3e3"/><rect x="54.5" y="64.6" width="6.0" height="0.8" fill="#e3e3e3"/><rect x="61.4" y="64.6" width="6.4" height="0.8" fill="#e3e3e3"/><rect x="68.9" y="64.6" width="3.3" height="0.8" fill="#e3e3e3"/><rect x="72.9" y="64.6" width="8.9" height="0.8" fill="#e3e3e3"/><rect x="82.9" y="64.6" width="8.2" height="0.8" fill="#e3e3e3"/><rect x="91.7" y="64.6" width="2.4" height="0.8" fill="#e3e3e3"/><rect x="94.9" y="64.6" width="2.1" height="0.8" fill="#e3e3e3"/><rect x="19.0" y="66.5" width="5.8" height="0.8" fill="#e3e3e3"/><rect x="25.4" y="66.5" width="2.6" height="0.8" fill="#e3e3e3"/><rect x="29.0" y="66.5" width="5.9" height="0.8" fill="#e3e3e3"/><rect x="35.9" y="66.5" width="4.6" height="0.8" fill="#e3e3e3"/><rect x="41.4" y="66.5" width="3.5" height="0.8" fill="#e3e3e3"/><rect x="45.7" y="66.5" width="7.2" height="0.8" fill="#e3e3e3"/><rect x="54.0" y="66.5" width="2.5" height="0.8" fill="#e3e3e3"/><rect x="57.2" y="66.5" width="7.7" height="0.8" fill="#e3e3e3"/><rect x="65.8" y="66.5" width="7.4" height="0.8" fill="#e3e3e3"/><rect x="73.9" y="66.5" width="5.0" height="0.8" fill="#e3e3e3"/><rect x="79.6" y="66.5" width="7.7" height="0.8" fill="#e3e3e3"/><rect x="88.1" y="66.5" width="6.6" height="0.8" fill="#e3e3e3"/><rect x="19.0" y="68.4" width="5.8" height="0.8" fill="#d9ddec"/><rect x="25.9" y="68.4" width="8.4" height="0.8" fill="#d9ddec"/><rect x="35.2" y="68.4" width="4.6" height="0.8" fill="#d9ddec"/><rect x="40.4" y="68.4" width="8.1" height="0.8" fill="#d9ddec"/><rect x="49.2" y="68.4" width="2.6" height="0.8" fill="#d9ddec"/><rect x="52.7" y="68.4" width="5.4" height="0.8" fill="#d9ddec"/><rect x="59.1" y="68.4" width="4.1" height="0.8" fill="#d9ddec"/><rect x="64.3" y="68.4" width="2.5" height="0.8" fill="#d9ddec"/><rect x="67.5" y="68.4" width="6.6" height="0.8" fill="#d9ddec"/><rect x="74.8" y="68.4" width="4.1" height="0.8" fill="#d9ddec"/><rect x="80.0" y="68.4" width="6.9" height="0.8" fill="#d9ddec"/><rect x="87.6" y="68.4" width="3.0" height="0.8" fill="#d9ddec"/><rect x="91.4" y="68.4" width="5.6" height="0.8" fill="#d9ddec"/><rect x="22.0" y="70.3" width="6.0" height="0.8" fill="#dcdcdc"/><rect x="29.1" y="70.3" width="8.6" height="0.8" fill="#dcdcdc"/><rect x="38.9" y="70.3" width="5.1" height="0.8" fill="#dcdcdc"/><rect x="19.0" y="73.8" width="8.8" height="0.8" fill="#dcdcdc"/><rect x="28.8" y="73.8" width="5.6" height="0.8" fill="#dcdcdc"/><rect x="35.1" y="73.8" width="7.8" height="0.8" fill="#dcdcdc"/><rect x="43.5" y="73.8" width="6.7" height="0.8" fill="#dcdcdc"/><rect x="51.2" y="73.8" width="7.6" height="0.8" fill="#dcdcdc"/><rect x="59.8" y="73.8" width="4.6" height="0.8" fill="#dcdcdc"/><rect x="65.2" y="73.8" width="3.1" height="0.8" fill="#dcdcdc"/><rect x="69.2" y="73.8" width="3.2" height="0.8" fill="#dcdcdc"/><rect x="73.1" y="73.8" width="5.2" height="0.8" fill="#dcdcdc"/><rect x="79.4" y="73.8" width="7.7" height="0.8" fill="#dcdcdc"/><rect x="87.9" y="73.8" width="2.4" height="0.8" fill="#dcdcdc"/><rect x="90.9" y="73.8" width="4.1" height="0.8" fill="#dcdcdc"/><rect x="19.0" y="75.7" width="6.1" height="0.8" fill="#dedede"/><rect x="25.9" y="75.7" width="5.8" height="0.8" fill="#dedede"/><rect x="32.5" y="75.7" width="3.9" height="0.8" fill="#dedede"/><rect x="37.1" y="75.7" width="4.2" height="0.8" fill="#dedede"/><rect x="41.9" y="75.7" width="6.6" height="0.8" fill="#dedede"/><rect x="49.1" y="75.7" width="7.7" height="0.8" fill="#dedede"/><rect x="57.7" y="75.7" width="7.0" height="0.8" fill="#dedede"/><rect x="65.5" y="75.7" width="8.4" height="0.8" fill="#dedede"/><rect x="74.7" y="75.7" width="5.2" height="0.8" fill="#dedede"/><rect x="80.7" y="75.7" width="7.7" height="0.8" fill="#dedede"/><rect x="89.2" y="75.7" width="3.0" height="0.8" fill="#dedede"/><rect x="93.0" y="75.7" width="4.0" height="0.8" fill="#dedede"/><rect x="19.0" y="77.6" width="7.3" height="0.8" fill="#dcdcdc"/><rect x="27.5" y="77.6" width="4.4" height="0.8" fill="#dcdcdc"/><rect x="32.5" y="77.6" width="4.6" height="0.8" fill="#dcdcdc"/><rect x="37.8" y="77.6" width="5.3" height="0.8" fill="#dcdcdc"/><rect x="44.0" y="77.6" width="2.2" height="0.8" fill="#dcdcdc"/><rect x="47.0" y="77.6" width="2.1" height="0.8" fill="#dcdcdc"/><rect x="49.7" y="77.6" width="8.5" height="0.8" fill="#dcdcdc"/><rect x="59.4" y="77.6" width="3.7" height="0.8" fill="#dcdcdc"/><rect x="63.8" y="77.6" width="6.4" height="0.8" fill="#dcdcdc"/><rect x="71.2" y="77.6" width="3.6" height="0.8" fill="#dcdcdc"/><rect x="99.6" y="4" width="1.6" height="75" fill="#ececec"/><rect x="99.6" y="30" width="1.6" height="12" fill="#c9c9c9"/><rect x="0" y="0" width="0.8" height="79" fill="#c6c6c6"/><rect x="101.2" y="0" width="0.8" height="79" fill="#c6c6c6"/><rect x="0" y="78" width="102" height="1" fill="#c2b294"/><rect x="0" y="78" width="20" height="1" fill="#a89a80"/></svg>
<svg style="left:910px;top:341.5px" width="102" height="79" viewBox="0 0 102 79"><rect x="0" y="0" width="102" height="79" fill="#ffffff"/><rect x="0" y="0" width="102" height="1.6" fill="#dcd2bc"/><rect x="74" y="0" width="28" height="1.6" fill="#eaa868"/><rect x="94" y="0" width="8" height="1.6" fill="#e07050"/><rect x="0" y="1.6" width="102" height="2.4" fill="#f1f1f1"/><rect x="2" y="2.2" width="1.5" height="1.2" fill="#888"/><rect x="5" y="2.2" width="1.5" height="1.2" fill="#999"/><rect x="9" y="2.5" width="20" height="0.6" fill="#ccc"/><rect x="0" y="4" width="14" height="75" fill="#f7f7f7"/><rect x="19.0" y="6.5" width="2.1" height="0.8" fill="#dcdcdc"/><rect x="21.9" y="6.5" width="3.9" height="0.8" fill="#dcdcdc"/><rect x="26.9" y="6.5" width="6.8" height="0.8" fill="#dcdcdc"/><rect x="34.7" y="6.5" width="5.9" height="0.8" fill="#dcdcdc"/><rect x="41.6" y="6.5" width="3.0" height="0.8" fill="#dcdcdc"/><rect x="45.5" y="6.5" width="3.1" height="0.8" fill="#dcdcdc"/><rect x="49.8" y="6.5" width="2.4" height="0.8" fill="#dcdcdc"/><rect x="53.3" y="6.5" width="2.5" height="0.8" fill="#dcdcdc"/><rect x="56.8" y="6.5" width="4.4" height="0.8" fill="#dcdcdc"/><rect x="62.0" y="6.5" width="7.9" height="0.8" fill="#dcdcdc"/><rect x="70.5" y="6.5" width="2.4" height="0.8" fill="#dcdcdc"/><rect x="74.1" y="6.5" width="5.6" height="0.8" fill="#dcdcdc"/><rect x="80.3" y="6.5" width="8.9" height="0.8" fill="#dcdcdc"/><rect x="90.4" y="6.5" width="2.8" height="0.8" fill="#dcdcdc"/><rect x="94.0" y="6.5" width="2.9" height="0.8" fill="#dcdcdc"/><rect x="22.0" y="8.4" width="8.8" height="0.8" fill="#e3e3e3"/><rect x="32.0" y="8.4" width="5.9" height="0.8" fill="#e3e3e3"/><rect x="38.8" y="8.4" width="2.6" height="0.8" fill="#e3e3e3"/><rect x="42.3" y="8.4" width="6.7" height="0.8" fill="#e3e3e3"/><rect x="49.9" y="8.4" width="6.3" height="0.8" fill="#e3e3e3"/><rect x="57.1" y="8.4" width="6.5" height="0.8" fill="#e3e3e3"/><rect x="64.2" y="8.4" width="3.3" height="0.8" fill="#e3e3e3"/><rect x="68.6" y="8.4" width="3.8" height="0.8" fill="#e3e3e3"/><rect x="73.6" y="8.4" width="8.1" height="0.8" fill="#e3e3e3"/><rect x="82.5" y="8.4" width="4.2" height="0.8" fill="#e3e3e3"/><rect x="87.4" y="8.4" width="4.3" height="0.8" fill="#e3e3e3"/><rect x="92.6" y="8.4" width="4.4" height="0.8" fill="#e3e3e3"/><rect x="19.0" y="10.3" width="2.2" height="0.8" fill="#dcdcdc"/><rect x="21.8" y="10.3" width="6.7" height="0.8" fill="#dcdcdc"/><rect x="29.2" y="10.3" width="3.4" height="0.8" fill="#dcdcdc"/><rect x="33.6" y="10.3" width="7.3" height="0.8" fill="#dcdcdc"/><rect x="41.6" y="10.3" width="2.5" height="0.8" fill="#dcdcdc"/><rect x="44.9" y="10.3" width="4.5" height="0.8" fill="#dcdcdc"/><rect x="19.0" y="13.8" width="4.4" height="0.8" fill="#e3e3e3"/><rect x="24.3" y="13.8" width="6.9" height="0.8" fill="#e3e3e3"/><rect x="32.2" y="13.8" width="3.7" height="0.8" fill="#e3e3e3"/><rect x="37.1" y="13.8" width="5.3" height="0.8" fill="#e3e3e3"/><rect x="43.3" y="13.8" width="3.3" height="0.8" fill="#e3e3e3"/><rect x="47.6" y="13.8" width="3.5" height="0.8" fill="#e3e3e3"/><rect x="52.1" y="13.8" width="8.6" height="0.8" fill="#e3e3e3"/><rect x="61.9" y="13.8" width="6.9" height="0.8" fill="#e3e3e3"/><rect x="19.0" y="17.3" width="9.0" height="0.8" fill="#d9ddec"/><rect x="28.9" y="17.3" width="2.2" height="0.8" fill="#d9ddec"/><rect x="31.9" y="17.3" width="7.5" height="0.8" fill="#d9ddec"/><rect x="40.5" y="17.3" width="6.5" height="0.8" fill="#d9ddec"/><rect x="47.7" y="17.3" width="5.7" height="0.8" fill="#d9ddec"/><rect x="22.0" y="20.8" width="8.3" height="0.8" fill="#dcdcdc"/><rect x="31.0" y="20.8" width="4.0" height="0.8" fill="#dcdcdc"/><rect x="36.1" y="20.8" width="3.9" height="0.8" fill="#dcdcdc"/><rect x="41.2" y="20.8" width="5.6" height="0.8" fill="#dcdcdc"/><rect x="47.9" y="20.8" width="6.9" height="0.8" fill="#dcdcdc"/><rect x="55.5" y="20.8" width="4.0" height="0.8" fill="#dcdcdc"/><rect x="60.3" y="20.8" width="6.8" height="0.8" fill="#dcdcdc"/><rect x="68.1" y="20.8" width="2.9" height="0.8" fill="#dcdcdc"/><rect x="72.1" y="20.8" width="4.9" height="0.8" fill="#dcdcdc"/><rect x="77.8" y="20.8" width="5.0" height="0.8" fill="#dcdcdc"/><rect x="84.0" y="20.8" width="5.9" height="0.8" fill="#dcdcdc"/><rect x="90.9" y="20.8" width="6.1" height="0.8" fill="#dcdcdc"/><rect x="19.0" y="22.7" width="5.0" height="0.8" fill="#dcdcdc"/><rect x="24.7" y="22.7" width="4.8" height="0.8" fill="#dcdcdc"/><rect x="30.2" y="22.7" width="5.9" height="0.8" fill="#dcdcdc"/><rect x="37.3" y="22.7" width="6.5" height="0.8" fill="#dcdcdc"/><rect x="44.6" y="22.7" width="3.1" height="0.8" fill="#dcdcdc"/><rect x="48.8" y="22.7" width="3.1" height="0.8" fill="#dcdcdc"/><rect x="52.5" y="22.7" width="2.3" height="0.8" fill="#dcdcdc"/><rect x="55.4" y="22.7" width="4.9" height="0.8" fill="#dcdcdc"/><rect x="61.0" y="22.7" width="8.5" height="0.8" fill="#dcdcdc"/><rect x="70.6" y="22.7" width="7.0" height="0.8" fill="#dcdcdc"/><rect x="78.2" y="22.7" width="3.9" height="0.8" fill="#dcdcdc"/><rect x="83.2" y="22.7" width="6.8" height="0.8" fill="#dcdcdc"/><rect x="90.9" y="22.7" width="6.1" height="0.8" fill="#dcdcdc"/><rect x="22.0" y="24.6" width="6.1" height="0.8" fill="#dcdcdc"/><rect x="28.7" y="24.6" width="4.5" height="0.8" fill="#dcdcdc"/><rect x="33.8" y="24.6" width="4.3" height="0.8" fill="#dcdcdc"/><rect x="39.2" y="24.6" width="7.0" height="0.8" fill="#dcdcdc"/><rect x="47.0" y="24.6" width="3.3" height="0.8" fill="#dcdcdc"/><rect x="51.3" y="24.6" width="6.5" height="0.8" fill="#dcdcdc"/><rect x="58.6" y="24.6" width="3.2" height="0.8" fill="#dcdcdc"/><rect x="62.6" y="24.6" width="6.4" height="0.8" fill="#dcdcdc"/><rect x="69.8" y="24.6" width="2.4" height="0.8" fill="#dcdcdc"/><rect x="19.0" y="28.1" width="2.1" height="0.8" fill="#e3e3e3"/><rect x="21.9" y="28.1" width="4.0" height="0.8" fill="#e3e3e3"/><rect x="26.5" y="28.1" width="5.0" height="0.8" fill="#e3e3e3"/><rect x="32.3" y="28.1" width="8.4" height="0.8" fill="#e3e3e3"/><rect x="41.6" y="28.1" width="6.9" height="0.8" fill="#e3e3e3"/><rect x="49.2" y="28.1" width="5.3" height="0.8" fill="#e3e3e3"/><rect x="55.4" y="28.1" width="7.9" height="0.8" fill="#e3e3e3"/><rect x="64.1" y="28.1" width="5.2" height="0.8" fill="#e3e3e3"/><rect x="70.4" y="28.1" width="7.8" height="0.8" fill="#e3e3e3"/><rect x="79.0" y="28.1" width="5.8" height="0.8" fill="#e3e3e3"/><rect x="85.8" y="28.1" width="4.8" height="0.8" fill="#e3e3e3"/><rect x="91.6" y="28.1" width="5.4" height="0.8" fill="#e3e3e3"/><rect x="22.0" y="30.0" width="4.5" height="0.8" fill="#d9ddec"/><rect x="27.5" y="30.0" width="4.3" height="0.8" fill="#d9ddec"/><rect x="32.6" y="30.0" width="4.5" height="0.8" fill="#d9ddec"/><rect x="38.0" y="30.0" width="3.0" height="0.8" fill="#d9ddec"/><rect x="41.6" y="30.0" width="5.8" height="0.8" fill="#d9ddec"/><rect x="48.2" y="30.0" width="2.3" height="0.8" fill="#d9ddec"/><rect x="51.6" y="30.0" width="4.0" height="0.8" fill="#d9ddec"/><rect x="56.8" y="30.0" width="6.2" height="0.8" fill="#d9ddec"/><rect x="63.8" y="30.0" width="8.1" height="0.8" fill="#d9ddec"/><rect x="73.0" y="30.0" width="4.2" height="0.8" fill="#d9ddec"/><rect x="78.0" y="30.0" width="6.5" height="0.8" fill="#d9ddec"/><rect x="85.6" y="30.0" width="6.3" height="0.8" fill="#d9ddec"/><rect x="92.9" y="30.0" width="4.1" height="0.8" fill="#d9ddec"/><rect x="19.0" y="31.9" width="5.4" height="0.8" fill="#dcdcdc"/><rect x="25.6" y="31.9" width="7.7" height="0.8" fill="#dcdcdc"/><rect x="34.0" y="31.9" width="7.5" height="0.8" fill="#dcdcdc"/><rect x="42.6" y="31.9" width="2.8" height="0.8" fill="#dcdcdc"/><rect x="46.2" y="31.9" width="8.1" height="0.8" fill="#dcdcdc"/><rect x="22.0" y="35.4" width="7.4" height="0.8" fill="#d9ddec"/><rect x="30.5" y="35.4" width="4.2" height="0.8" fill="#d9ddec"/><rect x="35.8" y="35.4" width="7.2" height="0.8" fill="#d9ddec"/><rect x="44.2" y="35.4" width="5.9" height="0.8" fill="#d9ddec"/><rect x="50.7" y="35.4" width="7.7" height="0.8" fill="#d9ddec"/><rect x="59.1" y="35.4" width="3.4" height="0.8" fill="#d9ddec"/><rect x="63.5" y="35.4" width="8.5" height="0.8" fill="#d9ddec"/><rect x="73.2" y="35.4" width="7.4" height="0.8" fill="#d9ddec"/><rect x="81.6" y="35.4" width="2.2" height="0.8" fill="#d9ddec"/><rect x="84.9" y="35.4" width="4.6" height="0.8" fill="#d9ddec"/><rect x="90.3" y="35.4" width="3.4" height="0.8" fill="#d9ddec"/><rect x="94.4" y="35.4" width="2.0" height="0.8" fill="#d9ddec"/><rect x="19.0" y="37.3" width="6.4" height="0.8" fill="#dcdcdc"/><rect x="26.3" y="37.3" width="6.4" height="0.8" fill="#dcdcdc"/><rect x="33.6" y="37.3" width="4.9" height="0.8" fill="#dcdcdc"/><rect x="39.4" y="37.3" width="7.0" height="0.8" fill="#dcdcdc"/><rect x="47.2" y="37.3" width="8.5" height="0.8" fill="#dcdcdc"/><rect x="56.6" y="37.3" width="8.0" height="0.8" fill="#dcdcdc"/><rect x="65.6" y="37.3" width="8.7" height="0.8" fill="#dcdcdc"/><rect x="75.3" y="37.3" width="5.0" height="0.8" fill="#dcdcdc"/><rect x="81.1" y="37.3" width="6.3" height="0.8" fill="#dcdcdc"/><rect x="88.4" y="37.3" width="7.9" height="0.8" fill="#dcdcdc"/><rect x="19.0" y="39.2" width="2.6" height="0.8" fill="#dcdcdc"/><rect x="22.2" y="39.2" width="2.1" height="0.8" fill="#dcdcdc"/><rect x="25.0" y="39.2" width="2.8" height="0.8" fill="#dcdcdc"/><rect x="28.8" y="39.2" width="6.3" height="0.8" fill="#dcdcdc"/><rect x="36.3" y="39.2" width="6.3" height="0.8" fill="#dcdcdc"/><rect x="22.0" y="42.7" width="6.4" height="0.8" fill="#dcdcdc"/><rect x="29.3" y="42.7" width="4.4" height="0.8" fill="#dcdcdc"/><rect x="34.6" y="42.7" width="7.8" height="0.8" fill="#dcdcdc"/><rect x="43.5" y="42.7" width="4.7" height="0.8" fill="#dcdcdc"/><rect x="49.3" y="42.7" width="4.4" height="0.8" fill="#dcdcdc"/><rect x="54.2" y="42.7" width="7.6" height="0.8" fill="#dcdcdc"/><rect x="62.8" y="42.7" width="8.9" height="0.8" fill="#dcdcdc"/><rect x="19" y="46.2" width="78" height="8" fill="#f6f6f6"/><rect x="22.0" y="47.2" width="2.1" height="0.8" fill="#e8c8c8"/><rect x="24.8" y="47.2" width="5.4" height="0.8" fill="#e8c8c8"/><rect x="31.2" y="47.2" width="7.8" height="0.8" fill="#e8c8c8"/><rect x="40.1" y="47.2" width="4.4" height="0.8" fill="#e8c8c8"/><rect x="45.3" y="47.2" width="8.0" height="0.8" fill="#e8c8c8"/><rect x="22.0" y="49.1" width="8.2" height="0.8" fill="#d8d8d8"/><rect x="31.2" y="49.1" width="6.3" height="0.8" fill="#d8d8d8"/><rect x="38.2" y="49.1" width="4.4" height="0.8" fill="#d8d8d8"/><rect x="43.3" y="49.1" width="6.0" height="0.8" fill="#d8d8d8"/><rect x="22.0" y="51.0" width="7.2" height="0.8" fill="#e8c8c8"/><rect x="30.0" y="51.0" width="4.9" height="0.8" fill="#e8c8c8"/><rect x="35.6" y="51.0" width="7.2" height="0.8" fill="#e8c8c8"/><rect x="43.7" y="51.0" width="3.2" height="0.8" fill="#e8c8c8"/><rect x="47.8" y="51.0" width="6.2" height="0.8" fill="#e8c8c8"/><rect x="55.0" y="51.0" width="2.0" height="0.8" fill="#e8c8c8"/><rect x="22.0" y="52.9" width="8.6" height="0.8" fill="#e8c8c8"/><rect x="31.6" y="52.9" width="2.5" height="0.8" fill="#e8c8c8"/><rect x="35.0" y="52.9" width="8.2" height="0.8" fill="#e8c8c8"/><rect x="44.4" y="52.9" width="3.2" height="0.8" fill="#e8c8c8"/><rect x="19.0" y="56.2" width="4.3" height="0.8" fill="#d9ddec"/><rect x="24.3" y="56.2" width="4.8" height="0.8" fill="#d9ddec"/><rect x="30.0" y="56.2" width="6.5" height="0.8" fill="#d9ddec"/><rect x="37.2" y="56.2" width="6.7" height="0.8" fill="#d9ddec"/><rect x="44.6" y="56.2" width="3.8" height="0.8" fill="#d9ddec"/><rect x="49.4" y="56.2" width="8.9" height="0.8" fill="#d9ddec"/><rect x="59.3" y="56.2" width="3.2" height="0.8" fill="#d9ddec"/><rect x="63.4" y="56.2" width="4.0" height="0.8" fill="#d9ddec"/><rect x="68.5" y="56.2" width="3.6" height="0.8" fill="#d9ddec"/><rect x="72.8" y="56.2" width="6.5" height="0.8" fill="#d9ddec"/><rect x="80.3" y="56.2" width="6.1" height="0.8" fill="#d9ddec"/><rect x="87.3" y="56.2" width="8.7" height="0.8" fill="#d9ddec"/><rect x="19.0" y="58.1" width="5.3" height="0.8" fill="#dcdcdc"/><rect x="25.1" y="58.1" width="7.0" height="0.8" fill="#dcdcdc"/><rect x="33.1" y="58.1" width="3.7" height="0.8" fill="#dcdcdc"/><rect x="37.7" y="58.1" width="7.1" height="0.8" fill="#dcdcdc"/><rect x="45.7" y="58.1" width="6.6" height="0.8" fill="#dcdcdc"/><rect x="53.3" y="58.1" width="7.0" height="0.8" fill="#dcdcdc"/><rect x="61.1" y="58.1" width="4.1" height="0.8" fill="#dcdcdc"/><rect x="65.9" y="58.1" width="8.2" height="0.8" fill="#dcdcdc"/><rect x="75.2" y="58.1" width="4.7" height="0.8" fill="#dcdcdc"/><rect x="81.1" y="58.1" width="8.3" height="0.8" fill="#dcdcdc"/><rect x="90.1" y="58.1" width="3.2" height="0.8" fill="#dcdcdc"/><rect x="19.0" y="61.6" width="7.8" height="0.8" fill="#dcdcdc"/><rect x="27.5" y="61.6" width="5.2" height="0.8" fill="#dcdcdc"/><rect x="33.6" y="61.6" width="3.7" height="0.8" fill="#dcdcdc"/><rect x="38.0" y="61.6" width="7.5" height="0.8" fill="#dcdcdc"/><rect x="46.4" y="61.6" width="5.6" height="0.8" fill="#dcdcdc"/><rect x="52.8" y="61.6" width="2.7" height="0.8" fill="#dcdcdc"/><rect x="56.2" y="61.6" width="7.9" height="0.8" fill="#dcdcdc"/><rect x="64.9" y="61.6" width="5.7" height="0.8" fill="#dcdcdc"/><rect x="71.3" y="61.6" width="8.7" height="0.8" fill="#dcdcdc"/><rect x="81.1" y="61.6" width="7.5" height="0.8" fill="#dcdcdc"/><rect x="89.3" y="61.6" width="3.5" height="0.8" fill="#dcdcdc"/><rect x="93.8" y="61.6" width="2.8" height="0.8" fill="#dcdcdc"/><rect x="19.0" y="63.5" width="2.8" height="0.8" fill="#dcdcdc"/><rect x="22.7" y="63.5" width="3.3" height="0.8" fill="#dcdcdc"/><rect x="27.1" y="63.5" width="7.9" height="0.8" fill="#dcdcdc"/><rect x="36.0" y="63.5" width="5.1" height="0.8" fill="#dcdcdc"/><rect x="41.7" y="63.5" width="5.5" height="0.8" fill="#dcdcdc"/><rect x="47.9" y="63.5" width="4.8" height="0.8" fill="#dcdcdc"/><rect x="53.4" y="63.5" width="8.4" height="0.8" fill="#dcdcdc"/><rect x="62.7" y="63.5" width="5.9" height="0.8" fill="#dcdcdc"/><rect x="69.8" y="63.5" width="8.3" height="0.8" fill="#dcdcdc"/><rect x="79.0" y="63.5" width="5.8" height="0.8" fill="#dcdcdc"/><rect x="85.9" y="63.5" width="4.6" height="0.8" fill="#dcdcdc"/><rect x="91.6" y="63.5" width="2.2" height="0.8" fill="#dcdcdc"/><rect x="94.9" y="63.5" width="2.1" height="0.8" fill="#dcdcdc"/><rect x="19.0" y="65.4" width="4.9" height="0.8" fill="#d9ddec"/><rect x="24.9" y="65.4" width="7.2" height="0.8" fill="#d9ddec"/><rect x="33.1" y="65.4" width="7.4" height="0.8" fill="#d9ddec"/><rect x="41.5" y="65.4" width="8.1" height="0.8" fill="#d9ddec"/><rect x="50.6" y="65.4" width="4.5" height="0.8" fill="#d9ddec"/><rect x="55.9" y="65.4" width="2.6" height="0.8" fill="#d9ddec"/><rect x="59.2" y="65.4" width="2.3" height="0.8" fill="#d9ddec"/><rect x="62.6" y="65.4" width="3.0" height="0.8" fill="#d9ddec"/><rect x="66.6" y="65.4" width="2.9" height="0.8" fill="#d9ddec"/><rect x="70.7" y="65.4" width="5.7" height="0.8" fill="#d9ddec"/><rect x="77.1" y="65.4" width="7.8" height="0.8" fill="#d9ddec"/><rect x="86.0" y="65.4" width="8.8" height="0.8" fill="#d9ddec"/><rect x="19.0" y="68.9" width="6.0" height="0.8" fill="#dcdcdc"/><rect x="26.0" y="68.9" width="7.3" height="0.8" fill="#dcdcdc"/><rect x="34.4" y="68.9" width="7.3" height="0.8" fill="#dcdcdc"/><rect x="42.4" y="68.9" width="7.3" height="0.8" fill="#dcdcdc"/><rect x="50.5" y="68.9" width="3.2" height="0.8" fill="#dcdcdc"/><rect x="54.3" y="68.9" width="6.4" height="0.8" fill="#dcdcdc"/><rect x="61.5" y="68.9" width="2.7" height="0.8" fill="#dcdcdc"/><rect x="65.1" y="68.9" width="4.9" height="0.8" fill="#dcdcdc"/><rect x="70.8" y="68.9" width="6.0" height="0.8" fill="#dcdcdc"/><rect x="77.6" y="68.9" width="5.7" height="0.8" fill="#dcdcdc"/><rect x="84.5" y="68.9" width="8.3" height="0.8" fill="#dcdcdc"/><rect x="93.7" y="68.9" width="3.3" height="0.8" fill="#dcdcdc"/><rect x="19.0" y="70.8" width="3.7" height="0.8" fill="#d9ddec"/><rect x="23.6" y="70.8" width="7.5" height="0.8" fill="#d9ddec"/><rect x="32.2" y="70.8" width="8.2" height="0.8" fill="#d9ddec"/><rect x="41.1" y="70.8" width="8.7" height="0.8" fill="#d9ddec"/><rect x="50.7" y="70.8" width="7.2" height="0.8" fill="#d9ddec"/><rect x="59.1" y="70.8" width="8.9" height="0.8" fill="#d9ddec"/><rect x="68.8" y="70.8" width="3.9" height="0.8" fill="#d9ddec"/><rect x="73.3" y="70.8" width="3.5" height="0.8" fill="#d9ddec"/><rect x="77.7" y="70.8" width="4.4" height="0.8" fill="#d9ddec"/><rect x="83.0" y="70.8" width="8.9" height="0.8" fill="#d9ddec"/><rect x="19.0" y="74.3" width="7.8" height="0.8" fill="#dedede"/><rect x="27.8" y="74.3" width="5.5" height="0.8" fill="#dedede"/><rect x="34.3" y="74.3" width="3.1" height="0.8" fill="#dedede"/><rect x="38.2" y="74.3" width="8.3" height="0.8" fill="#dedede"/><rect x="47.4" y="74.3" width="4.7" height="0.8" fill="#dedede"/><rect x="53.0" y="74.3" width="3.3" height="0.8" fill="#dedede"/><rect x="57.5" y="74.3" width="2.9" height="0.8" fill="#dedede"/><rect x="61.4" y="74.3" width="5.7" height="0.8" fill="#dedede"/><rect x="68.2" y="74.3" width="8.9" height="0.8" fill="#dedede"/><rect x="77.7" y="74.3" width="6.6" height="0.8" fill="#dedede"/><rect x="85.0" y="74.3" width="3.8" height="0.8" fill="#dedede"/><rect x="89.4" y="74.3" width="5.3" height="0.8" fill="#dedede"/><rect x="19.0" y="76.2" width="6.6" height="0.8" fill="#dcdcdc"/><rect x="26.7" y="76.2" width="3.2" height="0.8" fill="#dcdcdc"/><rect x="31.0" y="76.2" width="6.0" height="0.8" fill="#dcdcdc"/><rect x="37.7" y="76.2" width="6.0" height="0.8" fill="#dcdcdc"/><rect x="44.4" y="76.2" width="6.9" height="0.8" fill="#dcdcdc"/><rect x="52.4" y="76.2" width="6.4" height="0.8" fill="#dcdcdc"/><rect x="59.7" y="76.2" width="2.3" height="0.8" fill="#dcdcdc"/><rect x="62.9" y="76.2" width="2.2" height="0.8" fill="#dcdcdc"/><g fill="none" stroke="#8a8a8a" stroke-width="0.5"><circle cx="80" cy="13" r="1.6"/><circle cx="85" cy="16" r="1.6"/><circle cx="90" cy="15" r="1.6"/><circle cx="95" cy="17" r="1.6"/><circle cx="88" cy="20" r="1.6"/><circle cx="83" cy="20" r="1.6"/><path d="M80 13 L85 16 L90 15 L95 17 L88 20 L83 20 L85 16 M90 15 L88 20"/></g><rect x="75" y="10" width="24" height="18" fill="none" stroke="#eee" stroke-width="0.4"/><rect x="99.6" y="4" width="1.6" height="75" fill="#ececec"/><rect x="99.6" y="18" width="1.6" height="12" fill="#c9c9c9"/><rect x="0" y="0" width="0.8" height="79" fill="#c6c6c6"/><rect x="101.2" y="0" width="0.8" height="79" fill="#c6c6c6"/><rect x="0" y="78" width="102" height="1" fill="#c2b294"/><rect x="0" y="78" width="20" height="1" fill="#a89a80"/></svg>
<svg style="left:910px;top:445.5px" width="102" height="79">
 <defs><linearGradient id="sky" x1="0" y1="0" x2="0.3" y2="1"><stop offset="0" stop-color="#2a5cab"/><stop offset="0.5" stop-color="#4d7cc2"/><stop offset="0.62" stop-color="#7b95c6"/><stop offset="1" stop-color="#6f8fc4"/></linearGradient></defs>
 <rect x="0" y="0" width="102" height="79" fill="#fff"/>
 <rect x="0" y="0" width="102" height="1.6" fill="#dcd2bc"/><rect x="74" y="0" width="28" height="1.6" fill="#eaa868"/><rect x="94" y="0" width="8" height="1.6" fill="#e07050"/>
 <rect x="0" y="1.6" width="102" height="2.4" fill="#f1f1f1"/>
 <rect x="3" y="6.5" width="5" height="0.8" fill="#aaa"/><rect x="10" y="6.5" width="5" height="0.8" fill="#aaa"/><rect x="17" y="6.5" width="4" height="0.8" fill="#aaa"/>
 <rect x="33" y="6" width="26" height="1.6" fill="#8a8a8a"/>
 <rect x="80" y="6" width="9" height="2.2" fill="#7f9cc6"/><rect x="90" y="6" width="5" height="2.2" fill="#9ab"/>
 <rect x="25" y="9.6" width="58" height="0.6" fill="#e6c8a8"/>
 <rect x="8" y="12.5" width="9" height="0.7" fill="#bbb"/>
 <rect x="8" y="16" width="72" height="1.8" fill="#5a5a5a"/>
 <rect x="8" y="19.6" width="18" height="0.7" fill="#c9c9c9"/>
 <rect x="8" y="23" width="84" height="47" fill="url(#sky)"/>
 <path d="M8 58 L35 57 L35 61 L8 62 Z" fill="#2e3a55"/>
 <path d="M65 54 L92 52 L92 56 L65 57 Z" fill="#303a58"/>
 <path d="M8 62 L92 57 L92 70 L8 70 Z" fill="#7a93c8" opacity="0.7"/>
 <path d="M37 48 L64 47 L64 54 L68 64 L36 66 Z" fill="#dfe2ea"/>
 <path d="M40 49 L61 48.5 L61 51 L40 51.5 Z" fill="#2c3142"/>
 <path d="M36 64 L70 63 L71 70 L35 70 Z" fill="#22242e"/>
 <path d="M69 62 L78 63 L76 70 L70 70 Z" fill="#44506a"/>
 <rect x="46" y="23.5" width="2.6" height="24" fill="#2a3040"/>
 <rect x="43" y="31" width="8" height="1" fill="#2a3040"/><rect x="44" y="38" width="6" height="1" fill="#2a3040"/>
 <rect x="50" y="42" width="1" height="6" fill="#2a3040"/>
 <rect x="8" y="63" width="24" height="7" fill="#15161c"/>
 <path d="M9.5 64.5 L9.5 68 L12 66.2 Z" fill="#fff"/>
 <rect x="14" y="65" width="14" height="0.7" fill="#888"/><rect x="14" y="67" width="10" height="0.7" fill="#777"/>
 <rect x="8" y="71.5" width="52" height="0.7" fill="#d0d0d0"/><rect x="8" y="73" width="50" height="0.7" fill="#d8d8d8"/>
 <rect x="99.6" y="4" width="1.6" height="75" fill="#ececec"/><rect x="99.6" y="10" width="1.6" height="10" fill="#c9c9c9"/>
 <rect x="0" y="0" width="0.8" height="79" fill="#c6c6c6"/><rect x="101.2" y="0" width="0.8" height="79" fill="#c6c6c6"/>
 <rect x="0" y="78" width="102" height="1" fill="#c2b294"/><rect x="70" y="78" width="30" height="1" fill="#b07890"/>
</svg>
<svg style="left:910px;top:550px" width="102" height="79" viewBox="0 0 102 79"><rect x="0" y="0" width="102" height="79" fill="#ffffff"/><rect x="0" y="0" width="102" height="1.6" fill="#dcd2bc"/><rect x="74" y="0" width="28" height="1.6" fill="#eaa868"/><rect x="94" y="0" width="8" height="1.6" fill="#e07050"/><rect x="0" y="1.6" width="102" height="2.4" fill="#f1f1f1"/><rect x="2" y="2.2" width="1.5" height="1.2" fill="#888"/><rect x="5" y="2.2" width="1.5" height="1.2" fill="#999"/><rect x="9" y="2.5" width="20" height="0.6" fill="#ccc"/><rect x="0" y="4" width="14" height="75" fill="#f7f7f7"/><rect x="19" y="6.5" width="78" height="10" fill="#f6f6f6"/><rect x="22.0" y="7.5" width="3.9" height="0.8" fill="#d8d8d8"/><rect x="26.7" y="7.5" width="7.1" height="0.8" fill="#d8d8d8"/><rect x="34.8" y="7.5" width="4.1" height="0.8" fill="#d8d8d8"/><rect x="39.9" y="7.5" width="4.8" height="0.8" fill="#d8d8d8"/><rect x="45.8" y="7.5" width="2.8" height="0.8" fill="#d8d8d8"/><rect x="49.3" y="7.5" width="8.3" height="0.8" fill="#d8d8d8"/><rect x="22.0" y="9.4" width="3.1" height="0.8" fill="#d8d8d8"/><rect x="26.1" y="9.4" width="3.9" height="0.8" fill="#d8d8d8"/><rect x="30.7" y="9.4" width="2.5" height="0.8" fill="#d8d8d8"/><rect x="34.1" y="9.4" width="2.2" height="0.8" fill="#d8d8d8"/><rect x="37.1" y="9.4" width="7.7" height="0.8" fill="#d8d8d8"/><rect x="22.0" y="11.3" width="8.3" height="0.8" fill="#e8c8c8"/><rect x="30.9" y="11.3" width="6.5" height="0.8" fill="#e8c8c8"/><rect x="38.5" y="11.3" width="6.1" height="0.8" fill="#e8c8c8"/><rect x="45.6" y="11.3" width="4.5" height="0.8" fill="#e8c8c8"/><rect x="51.3" y="11.3" width="3.2" height="0.8" fill="#e8c8c8"/><rect x="22.0" y="13.2" width="5.2" height="0.8" fill="#e8c8c8"/><rect x="27.9" y="13.2" width="7.6" height="0.8" fill="#e8c8c8"/><rect x="36.4" y="13.2" width="2.7" height="0.8" fill="#e8c8c8"/><rect x="40.2" y="13.2" width="2.6" height="0.8" fill="#e8c8c8"/><rect x="43.6" y="13.2" width="2.2" height="0.8" fill="#e8c8c8"/><rect x="46.8" y="13.2" width="2.8" height="0.8" fill="#e8c8c8"/><rect x="50.5" y="13.2" width="2.7" height="0.8" fill="#e8c8c8"/><rect x="54.1" y="13.2" width="3.1" height="0.8" fill="#e8c8c8"/><rect x="22.0" y="15.1" width="5.2" height="0.8" fill="#e8c8c8"/><rect x="28.1" y="15.1" width="7.8" height="0.8" fill="#e8c8c8"/><rect x="36.6" y="15.1" width="4.8" height="0.8" fill="#e8c8c8"/><rect x="42.2" y="15.1" width="6.3" height="0.8" fill="#e8c8c8"/><rect x="22.0" y="18.5" width="6.0" height="0.8" fill="#d9ddec"/><rect x="28.6" y="18.5" width="6.9" height="0.8" fill="#d9ddec"/><rect x="36.7" y="18.5" width="5.0" height="0.8" fill="#d9ddec"/><rect x="42.5" y="18.5" width="6.0" height="0.8" fill="#d9ddec"/><rect x="49.6" y="18.5" width="3.8" height="0.8" fill="#d9ddec"/><rect x="54.3" y="18.5" width="3.3" height="0.8" fill="#d9ddec"/><rect x="58.6" y="18.5" width="5.3" height="0.8" fill="#d9ddec"/><rect x="64.6" y="18.5" width="4.7" height="0.8" fill="#d9ddec"/><rect x="69.9" y="18.5" width="4.2" height="0.8" fill="#d9ddec"/><rect x="75.3" y="18.5" width="6.1" height="0.8" fill="#d9ddec"/><rect x="82.2" y="18.5" width="8.6" height="0.8" fill="#d9ddec"/><rect x="91.5" y="18.5" width="3.8" height="0.8" fill="#d9ddec"/><rect x="19.0" y="20.4" width="2.0" height="0.8" fill="#e3e3e3"/><rect x="21.8" y="20.4" width="5.5" height="0.8" fill="#e3e3e3"/><rect x="28.0" y="20.4" width="3.5" height="0.8" fill="#e3e3e3"/><rect x="32.4" y="20.4" width="4.3" height="0.8" fill="#e3e3e3"/><rect x="37.8" y="20.4" width="8.3" height="0.8" fill="#e3e3e3"/><rect x="46.7" y="20.4" width="8.5" height="0.8" fill="#e3e3e3"/><rect x="56.2" y="20.4" width="7.5" height="0.8" fill="#e3e3e3"/><rect x="64.4" y="20.4" width="6.5" height="0.8" fill="#e3e3e3"/><rect x="71.6" y="20.4" width="5.4" height="0.8" fill="#e3e3e3"/><rect x="77.8" y="20.4" width="4.7" height="0.8" fill="#e3e3e3"/><rect x="83.4" y="20.4" width="8.4" height="0.8" fill="#e3e3e3"/><rect x="92.7" y="20.4" width="4.3" height="0.8" fill="#e3e3e3"/><rect x="22.0" y="22.3" width="5.3" height="0.8" fill="#dcdcdc"/><rect x="28.1" y="22.3" width="3.8" height="0.8" fill="#dcdcdc"/><rect x="32.6" y="22.3" width="3.4" height="0.8" fill="#dcdcdc"/><rect x="37.0" y="22.3" width="3.0" height="0.8" fill="#dcdcdc"/><rect x="40.7" y="22.3" width="5.1" height="0.8" fill="#dcdcdc"/><rect x="46.8" y="22.3" width="4.7" height="0.8" fill="#dcdcdc"/><rect x="52.5" y="22.3" width="3.8" height="0.8" fill="#dcdcdc"/><rect x="57.2" y="22.3" width="5.0" height="0.8" fill="#dcdcdc"/><rect x="62.8" y="22.3" width="3.6" height="0.8" fill="#dcdcdc"/><rect x="67.1" y="22.3" width="7.1" height="0.8" fill="#dcdcdc"/><rect x="74.8" y="22.3" width="6.7" height="0.8" fill="#dcdcdc"/><rect x="82.2" y="22.3" width="6.5" height="0.8" fill="#dcdcdc"/><rect x="89.8" y="22.3" width="4.5" height="0.8" fill="#dcdcdc"/><rect x="22.0" y="24.2" width="6.0" height="0.8" fill="#dedede"/><rect x="28.9" y="24.2" width="8.7" height="0.8" fill="#dedede"/><rect x="38.4" y="24.2" width="2.5" height="0.8" fill="#dedede"/><rect x="41.8" y="24.2" width="9.0" height="0.8" fill="#dedede"/><rect x="51.7" y="24.2" width="6.5" height="0.8" fill="#dedede"/><rect x="59.4" y="24.2" width="8.4" height="0.8" fill="#dedede"/><rect x="68.5" y="24.2" width="7.9" height="0.8" fill="#dedede"/><rect x="19" y="28.2" width="16.5" height="1.1" fill="#b0b0b0"/><rect x="19" y="30.1" width="78" height="0.5" fill="#e4e4e4"/><rect x="19.0" y="31.7" width="2.9" height="0.8" fill="#dedede"/><rect x="22.8" y="31.7" width="6.1" height="0.8" fill="#dedede"/><rect x="29.5" y="31.7" width="5.1" height="0.8" fill="#dedede"/><rect x="35.7" y="31.7" width="5.5" height="0.8" fill="#dedede"/><rect x="42.1" y="31.7" width="4.1" height="0.8" fill="#dedede"/><rect x="47.4" y="31.7" width="3.7" height="0.8" fill="#dedede"/><rect x="52.1" y="31.7" width="6.5" height="0.8" fill="#dedede"/><rect x="59.2" y="31.7" width="9.0" height="0.8" fill="#dedede"/><rect x="68.9" y="31.7" width="8.9" height="0.8" fill="#dedede"/><rect x="79.0" y="31.7" width="6.0" height="0.8" fill="#dedede"/><rect x="19.0" y="35.2" width="7.1" height="0.8" fill="#d9ddec"/><rect x="26.9" y="35.2" width="3.8" height="0.8" fill="#d9ddec"/><rect x="31.4" y="35.2" width="6.0" height="0.8" fill="#d9ddec"/><rect x="38.4" y="35.2" width="4.2" height="0.8" fill="#d9ddec"/><rect x="43.3" y="35.2" width="6.1" height="0.8" fill="#d9ddec"/><rect x="50.6" y="35.2" width="2.2" height="0.8" fill="#d9ddec"/><rect x="53.7" y="35.2" width="9.0" height="0.8" fill="#d9ddec"/><rect x="63.5" y="35.2" width="4.7" height="0.8" fill="#d9ddec"/><rect x="69.2" y="35.2" width="3.8" height="0.8" fill="#d9ddec"/><rect x="74.0" y="35.2" width="8.8" height="0.8" fill="#d9ddec"/><rect x="84.0" y="35.2" width="7.5" height="0.8" fill="#d9ddec"/><rect x="92.3" y="35.2" width="4.7" height="0.8" fill="#d9ddec"/><rect x="22.0" y="37.1" width="7.3" height="0.8" fill="#dedede"/><rect x="30.4" y="37.1" width="3.4" height="0.8" fill="#dedede"/><rect x="34.9" y="37.1" width="2.5" height="0.8" fill="#dedede"/><rect x="38.5" y="37.1" width="5.2" height="0.8" fill="#dedede"/><rect x="44.7" y="37.1" width="2.4" height="0.8" fill="#dedede"/><rect x="47.7" y="37.1" width="7.7" height="0.8" fill="#dedede"/><rect x="56.4" y="37.1" width="4.0" height="0.8" fill="#dedede"/><rect x="61.6" y="37.1" width="5.2" height="0.8" fill="#dedede"/><rect x="67.9" y="37.1" width="2.5" height="0.8" fill="#dedede"/><rect x="71.0" y="37.1" width="7.0" height="0.8" fill="#dedede"/><rect x="79.1" y="37.1" width="5.2" height="0.8" fill="#dedede"/><rect x="85.0" y="37.1" width="2.8" height="0.8" fill="#dedede"/><rect x="88.6" y="37.1" width="3.5" height="0.8" fill="#dedede"/><rect x="93.1" y="37.1" width="3.9" height="0.8" fill="#dedede"/><rect x="19.0" y="39.0" width="3.2" height="0.8" fill="#dedede"/><rect x="23.2" y="39.0" width="2.9" height="0.8" fill="#dedede"/><rect x="27.3" y="39.0" width="3.9" height="0.8" fill="#dedede"/><rect x="32.3" y="39.0" width="5.7" height="0.8" fill="#dedede"/><rect x="38.8" y="39.0" width="5.6" height="0.8" fill="#dedede"/><rect x="45.4" y="39.0" width="5.4" height="0.8" fill="#dedede"/><rect x="51.8" y="39.0" width="4.6" height="0.8" fill="#dedede"/><rect x="57.6" y="39.0" width="3.2" height="0.8" fill="#dedede"/><rect x="61.9" y="39.0" width="2.2" height="0.8" fill="#dedede"/><rect x="64.9" y="39.0" width="2.5" height="0.8" fill="#dedede"/><rect x="68.1" y="39.0" width="6.1" height="0.8" fill="#dedede"/><rect x="75.3" y="39.0" width="4.2" height="0.8" fill="#dedede"/><rect x="80.3" y="39.0" width="5.3" height="0.8" fill="#dedede"/><rect x="86.6" y="39.0" width="4.5" height="0.8" fill="#dedede"/><rect x="91.9" y="39.0" width="5.1" height="0.8" fill="#dedede"/><rect x="22.0" y="40.9" width="2.8" height="0.8" fill="#dcdcdc"/><rect x="25.4" y="40.9" width="8.1" height="0.8" fill="#dcdcdc"/><rect x="34.3" y="40.9" width="4.1" height="0.8" fill="#dcdcdc"/><rect x="39.4" y="40.9" width="3.4" height="0.8" fill="#dcdcdc"/><rect x="43.7" y="40.9" width="7.2" height="0.8" fill="#dcdcdc"/><rect x="52.1" y="40.9" width="4.0" height="0.8" fill="#dcdcdc"/><rect x="56.9" y="40.9" width="2.5" height="0.8" fill="#dcdcdc"/><rect x="22.0" y="44.4" width="2.4" height="0.8" fill="#e3e3e3"/><rect x="25.3" y="44.4" width="5.8" height="0.8" fill="#e3e3e3"/><rect x="32.3" y="44.4" width="6.1" height="0.8" fill="#e3e3e3"/><rect x="39.2" y="44.4" width="2.6" height="0.8" fill="#e3e3e3"/><rect x="42.5" y="44.4" width="8.9" height="0.8" fill="#e3e3e3"/><rect x="52.3" y="44.4" width="2.8" height="0.8" fill="#e3e3e3"/><rect x="56.2" y="44.4" width="8.7" height="0.8" fill="#e3e3e3"/><rect x="66.0" y="44.4" width="6.1" height="0.8" fill="#e3e3e3"/><rect x="72.8" y="44.4" width="7.1" height="0.8" fill="#e3e3e3"/><rect x="19.0" y="47.9" width="6.5" height="0.8" fill="#dedede"/><rect x="26.6" y="47.9" width="8.1" height="0.8" fill="#dedede"/><rect x="35.5" y="47.9" width="5.5" height="0.8" fill="#dedede"/><rect x="42.1" y="47.9" width="3.2" height="0.8" fill="#dedede"/><rect x="46.2" y="47.9" width="7.0" height="0.8" fill="#dedede"/><rect x="53.8" y="47.9" width="4.5" height="0.8" fill="#dedede"/><rect x="59.2" y="47.9" width="4.2" height="0.8" fill="#dedede"/><rect x="64.5" y="47.9" width="5.7" height="0.8" fill="#dedede"/><rect x="71.0" y="47.9" width="5.8" height="0.8" fill="#dedede"/><rect x="77.6" y="47.9" width="6.9" height="0.8" fill="#dedede"/><rect x="85.7" y="47.9" width="3.2" height="0.8" fill="#dedede"/><rect x="89.6" y="47.9" width="2.3" height="0.8" fill="#dedede"/><rect x="93.0" y="47.9" width="2.5" height="0.8" fill="#dedede"/><rect x="19.0" y="49.8" width="5.9" height="0.8" fill="#e3e3e3"/><rect x="26.1" y="49.8" width="6.9" height="0.8" fill="#e3e3e3"/><rect x="34.2" y="49.8" width="3.1" height="0.8" fill="#e3e3e3"/><rect x="38.4" y="49.8" width="5.8" height="0.8" fill="#e3e3e3"/><rect x="45.2" y="49.8" width="4.1" height="0.8" fill="#e3e3e3"/><rect x="50.1" y="49.8" width="4.1" height="0.8" fill="#e3e3e3"/><rect x="54.8" y="49.8" width="8.7" height="0.8" fill="#e3e3e3"/><rect x="64.2" y="49.8" width="3.7" height="0.8" fill="#e3e3e3"/><rect x="68.9" y="49.8" width="3.4" height="0.8" fill="#e3e3e3"/><rect x="73.1" y="49.8" width="3.8" height="0.8" fill="#e3e3e3"/><rect x="77.6" y="49.8" width="2.1" height="0.8" fill="#e3e3e3"/><rect x="80.7" y="49.8" width="6.6" height="0.8" fill="#e3e3e3"/><rect x="88.1" y="49.8" width="8.3" height="0.8" fill="#e3e3e3"/><rect x="19.0" y="51.7" width="2.4" height="0.8" fill="#e3e3e3"/><rect x="22.1" y="51.7" width="3.3" height="0.8" fill="#e3e3e3"/><rect x="26.3" y="51.7" width="7.7" height="0.8" fill="#e3e3e3"/><rect x="35.0" y="51.7" width="3.9" height="0.8" fill="#e3e3e3"/><rect x="39.8" y="51.7" width="7.4" height="0.8" fill="#e3e3e3"/><rect x="48.3" y="51.7" width="3.5" height="0.8" fill="#e3e3e3"/><rect x="19.0" y="55.2" width="8.5" height="0.8" fill="#d9ddec"/><rect x="28.4" y="55.2" width="4.8" height="0.8" fill="#d9ddec"/><rect x="34.1" y="55.2" width="5.7" height="0.8" fill="#d9ddec"/><rect x="41.0" y="55.2" width="4.2" height="0.8" fill="#d9ddec"/><rect x="46.2" y="55.2" width="7.9" height="0.8" fill="#d9ddec"/><rect x="54.6" y="55.2" width="6.6" height="0.8" fill="#d9ddec"/><rect x="62.4" y="55.2" width="2.4" height="0.8" fill="#d9ddec"/><rect x="65.6" y="55.2" width="3.3" height="0.8" fill="#d9ddec"/><rect x="69.6" y="55.2" width="5.5" height="0.8" fill="#d9ddec"/><rect x="76.1" y="55.2" width="7.3" height="0.8" fill="#d9ddec"/><rect x="84.1" y="55.2" width="6.0" height="0.8" fill="#d9ddec"/><rect x="91.2" y="55.2" width="2.5" height="0.8" fill="#d9ddec"/><rect x="94.4" y="55.2" width="2.6" height="0.8" fill="#d9ddec"/><rect x="22.0" y="57.1" width="8.7" height="0.8" fill="#dcdcdc"/><rect x="31.7" y="57.1" width="8.2" height="0.8" fill="#dcdcdc"/><rect x="40.8" y="57.1" width="7.6" height="0.8" fill="#dcdcdc"/><rect x="49.3" y="57.1" width="4.7" height="0.8" fill="#dcdcdc"/><rect x="54.9" y="57.1" width="6.9" height="0.8" fill="#dcdcdc"/><rect x="62.6" y="57.1" width="4.0" height="0.8" fill="#dcdcdc"/><rect x="67.3" y="57.1" width="2.9" height="0.8" fill="#dcdcdc"/><rect x="71.3" y="57.1" width="2.9" height="0.8" fill="#dcdcdc"/><rect x="75.3" y="57.1" width="8.5" height="0.8" fill="#dcdcdc"/><rect x="84.8" y="57.1" width="5.4" height="0.8" fill="#dcdcdc"/><rect x="90.8" y="57.1" width="5.3" height="0.8" fill="#dcdcdc"/><rect x="22.0" y="59.0" width="6.2" height="0.8" fill="#e3e3e3"/><rect x="29.3" y="59.0" width="3.2" height="0.8" fill="#e3e3e3"/><rect x="33.1" y="59.0" width="4.1" height="0.8" fill="#e3e3e3"/><rect x="38.4" y="59.0" width="2.3" height="0.8" fill="#e3e3e3"/><rect x="41.5" y="59.0" width="5.6" height="0.8" fill="#e3e3e3"/><rect x="22.0" y="62.5" width="7.3" height="0.8" fill="#dedede"/><rect x="30.2" y="62.5" width="3.0" height="0.8" fill="#dedede"/><rect x="33.9" y="62.5" width="4.3" height="0.8" fill="#dedede"/><rect x="39.2" y="62.5" width="4.9" height="0.8" fill="#dedede"/><rect x="45.0" y="62.5" width="6.3" height="0.8" fill="#dedede"/><rect x="52.3" y="62.5" width="5.4" height="0.8" fill="#dedede"/><rect x="58.8" y="62.5" width="2.4" height="0.8" fill="#dedede"/><rect x="62.3" y="62.5" width="7.0" height="0.8" fill="#dedede"/><rect x="70.0" y="62.5" width="6.2" height="0.8" fill="#dedede"/><rect x="77.3" y="62.5" width="2.9" height="0.8" fill="#dedede"/><rect x="19" y="66.5" width="15.4" height="1.1" fill="#b0b0b0"/><rect x="19" y="68.4" width="78" height="0.5" fill="#e4e4e4"/><rect x="22.0" y="70.0" width="3.3" height="0.8" fill="#d9ddec"/><rect x="26.1" y="70.0" width="3.9" height="0.8" fill="#d9ddec"/><rect x="31.1" y="70.0" width="5.3" height="0.8" fill="#d9ddec"/><rect x="37.2" y="70.0" width="5.4" height="0.8" fill="#d9ddec"/><rect x="43.6" y="70.0" width="3.5" height="0.8" fill="#d9ddec"/><rect x="47.9" y="70.0" width="6.3" height="0.8" fill="#d9ddec"/><rect x="54.9" y="70.0" width="8.9" height="0.8" fill="#d9ddec"/><rect x="64.5" y="70.0" width="2.6" height="0.8" fill="#d9ddec"/><rect x="67.9" y="70.0" width="5.5" height="0.8" fill="#d9ddec"/><rect x="74.1" y="70.0" width="6.1" height="0.8" fill="#d9ddec"/><rect x="81.1" y="70.0" width="6.5" height="0.8" fill="#d9ddec"/><rect x="88.8" y="70.0" width="4.0" height="0.8" fill="#d9ddec"/><rect x="93.8" y="70.0" width="3.2" height="0.8" fill="#d9ddec"/><rect x="19.0" y="71.9" width="2.2" height="0.8" fill="#e3e3e3"/><rect x="21.8" y="71.9" width="2.4" height="0.8" fill="#e3e3e3"/><rect x="24.9" y="71.9" width="7.3" height="0.8" fill="#e3e3e3"/><rect x="33.4" y="71.9" width="7.3" height="0.8" fill="#e3e3e3"/><rect x="41.7" y="71.9" width="4.7" height="0.8" fill="#e3e3e3"/><rect x="47.2" y="71.9" width="2.9" height="0.8" fill="#e3e3e3"/><rect x="50.9" y="71.9" width="2.9" height="0.8" fill="#e3e3e3"/><rect x="54.8" y="71.9" width="5.8" height="0.8" fill="#e3e3e3"/><rect x="61.4" y="71.9" width="8.0" height="0.8" fill="#e3e3e3"/><rect x="70.2" y="71.9" width="8.1" height="0.8" fill="#e3e3e3"/><rect x="79.3" y="71.9" width="6.4" height="0.8" fill="#e3e3e3"/><rect x="86.7" y="71.9" width="6.4" height="0.8" fill="#e3e3e3"/><rect x="94.2" y="71.9" width="2.8" height="0.8" fill="#e3e3e3"/><rect x="19.0" y="73.8" width="2.3" height="0.8" fill="#e3e3e3"/><rect x="22.3" y="73.8" width="6.2" height="0.8" fill="#e3e3e3"/><rect x="29.4" y="73.8" width="4.7" height="0.8" fill="#e3e3e3"/><rect x="34.8" y="73.8" width="4.7" height="0.8" fill="#e3e3e3"/><rect x="40.2" y="73.8" width="4.3" height="0.8" fill="#e3e3e3"/><rect x="45.3" y="73.8" width="7.2" height="0.8" fill="#e3e3e3"/><rect x="53.4" y="73.8" width="7.8" height="0.8" fill="#e3e3e3"/><rect x="62.2" y="73.8" width="4.3" height="0.8" fill="#e3e3e3"/><rect x="67.5" y="73.8" width="8.5" height="0.8" fill="#e3e3e3"/><rect x="76.6" y="73.8" width="5.9" height="0.8" fill="#e3e3e3"/><rect x="83.4" y="73.8" width="8.6" height="0.8" fill="#e3e3e3"/><rect x="93.2" y="73.8" width="3.8" height="0.8" fill="#e3e3e3"/><rect x="19.0" y="75.7" width="6.7" height="0.8" fill="#d9ddec"/><rect x="26.4" y="75.7" width="5.1" height="0.8" fill="#d9ddec"/><rect x="32.7" y="75.7" width="3.9" height="0.8" fill="#d9ddec"/><rect x="37.4" y="75.7" width="8.6" height="0.8" fill="#d9ddec"/><rect x="46.8" y="75.7" width="8.0" height="0.8" fill="#d9ddec"/><rect x="55.8" y="75.7" width="3.0" height="0.8" fill="#d9ddec"/><rect x="59.5" y="75.7" width="6.2" height="0.8" fill="#d9ddec"/><rect x="66.8" y="75.7" width="8.1" height="0.8" fill="#d9ddec"/><rect x="76.0" y="75.7" width="7.3" height="0.8" fill="#d9ddec"/><rect x="84.3" y="75.7" width="8.3" height="0.8" fill="#d9ddec"/><rect x="17" y="30.5" width="82.5" height="3.4" fill="#3d8ee0"/><rect x="99.6" y="4" width="1.6" height="75" fill="#ececec"/><rect x="99.6" y="30" width="1.6" height="12" fill="#c9c9c9"/><rect x="0" y="0" width="0.8" height="79" fill="#c6c6c6"/><rect x="101.2" y="0" width="0.8" height="79" fill="#c6c6c6"/><rect x="0" y="78" width="102" height="1" fill="#c2b294"/><rect x="0" y="78" width="20" height="1" fill="#a89a80"/></svg>
<div class="desc" style="left:909px;top:629.8px;height:98.5px;overflow:hidden">Vastness: The World Wide Web contains many<br>billions of pages. The SNOMED CT medical<br>terminology ontology alone contains 370,000 class<br>names, and existing technology has not yet been<br>able to eliminate all semantically duplicated terms.<br>Any automated reasoning system will have to deal<br>with truly huge inputs.</div>
<svg style="left:910px;top:754px" width="102" height="57" viewBox="0 0 102 57"><rect x="0" y="0" width="102" height="79" fill="#ffffff"/><rect x="0" y="0" width="102" height="1.6" fill="#dcd2bc"/><rect x="74" y="0" width="28" height="1.6" fill="#eaa868"/><rect x="94" y="0" width="8" height="1.6" fill="#e07050"/><rect x="0" y="1.6" width="102" height="2.4" fill="#f1f1f1"/><rect x="2" y="2.2" width="1.5" height="1.2" fill="#888"/><rect x="5" y="2.2" width="1.5" height="1.2" fill="#999"/><rect x="9" y="2.5" width="20" height="0.6" fill="#ccc"/><rect x="0" y="4" width="14" height="75" fill="#f7f7f7"/><rect x="19.0" y="6.5" width="8.4" height="0.8" fill="#e3e3e3"/><rect x="28.1" y="6.5" width="2.4" height="0.8" fill="#e3e3e3"/><rect x="31.6" y="6.5" width="3.0" height="0.8" fill="#e3e3e3"/><rect x="35.6" y="6.5" width="4.6" height="0.8" fill="#e3e3e3"/><rect x="40.9" y="6.5" width="5.3" height="0.8" fill="#e3e3e3"/><rect x="47.0" y="6.5" width="4.7" height="0.8" fill="#e3e3e3"/><rect x="52.5" y="6.5" width="8.5" height="0.8" fill="#e3e3e3"/><rect x="61.8" y="6.5" width="4.5" height="0.8" fill="#e3e3e3"/><rect x="67.1" y="6.5" width="2.2" height="0.8" fill="#e3e3e3"/><rect x="19.0" y="10.0" width="2.6" height="0.8" fill="#dcdcdc"/><rect x="22.5" y="10.0" width="4.5" height="0.8" fill="#dcdcdc"/><rect x="28.0" y="10.0" width="8.5" height="0.8" fill="#dcdcdc"/><rect x="37.5" y="10.0" width="4.8" height="0.8" fill="#dcdcdc"/><rect x="43.4" y="10.0" width="9.0" height="0.8" fill="#dcdcdc"/><rect x="53.3" y="10.0" width="8.6" height="0.8" fill="#dcdcdc"/><rect x="62.5" y="10.0" width="3.0" height="0.8" fill="#dcdcdc"/><rect x="66.2" y="10.0" width="8.6" height="0.8" fill="#dcdcdc"/><rect x="75.8" y="10.0" width="7.0" height="0.8" fill="#dcdcdc"/><rect x="83.6" y="10.0" width="5.5" height="0.8" fill="#dcdcdc"/><rect x="90.2" y="10.0" width="2.7" height="0.8" fill="#dcdcdc"/><rect x="93.5" y="10.0" width="2.3" height="0.8" fill="#dcdcdc"/><rect x="22.0" y="11.9" width="4.8" height="0.8" fill="#d9ddec"/><rect x="27.7" y="11.9" width="3.3" height="0.8" fill="#d9ddec"/><rect x="32.1" y="11.9" width="4.5" height="0.8" fill="#d9ddec"/><rect x="37.4" y="11.9" width="4.2" height="0.8" fill="#d9ddec"/><rect x="42.6" y="11.9" width="4.2" height="0.8" fill="#d9ddec"/><rect x="48.0" y="11.9" width="4.4" height="0.8" fill="#d9ddec"/><rect x="53.2" y="11.9" width="2.5" height="0.8" fill="#d9ddec"/><rect x="56.9" y="11.9" width="7.6" height="0.8" fill="#d9ddec"/><rect x="65.3" y="11.9" width="2.8" height="0.8" fill="#d9ddec"/><rect x="69.0" y="11.9" width="4.6" height="0.8" fill="#d9ddec"/><rect x="74.8" y="11.9" width="8.5" height="0.8" fill="#d9ddec"/><rect x="84.3" y="11.9" width="4.0" height="0.8" fill="#d9ddec"/><rect x="89.0" y="11.9" width="8.0" height="0.8" fill="#d9ddec"/><rect x="19.0" y="13.8" width="6.0" height="0.8" fill="#dcdcdc"/><rect x="26.1" y="13.8" width="5.5" height="0.8" fill="#dcdcdc"/><rect x="32.5" y="13.8" width="5.3" height="0.8" fill="#dcdcdc"/><rect x="38.4" y="13.8" width="8.7" height="0.8" fill="#dcdcdc"/><rect x="47.9" y="13.8" width="7.3" height="0.8" fill="#dcdcdc"/><rect x="56.1" y="13.8" width="7.0" height="0.8" fill="#dcdcdc"/><rect x="64.1" y="13.8" width="6.3" height="0.8" fill="#dcdcdc"/><rect x="71.0" y="13.8" width="7.3" height="0.8" fill="#dcdcdc"/><rect x="79.4" y="13.8" width="5.0" height="0.8" fill="#dcdcdc"/><rect x="85.1" y="13.8" width="8.5" height="0.8" fill="#dcdcdc"/><rect x="94.4" y="13.8" width="2.6" height="0.8" fill="#dcdcdc"/><rect x="19.0" y="15.7" width="2.1" height="0.8" fill="#dcdcdc"/><rect x="22.1" y="15.7" width="4.4" height="0.8" fill="#dcdcdc"/><rect x="27.4" y="15.7" width="5.6" height="0.8" fill="#dcdcdc"/><rect x="33.7" y="15.7" width="3.7" height="0.8" fill="#dcdcdc"/><rect x="38.6" y="15.7" width="2.2" height="0.8" fill="#dcdcdc"/><rect x="19.0" y="19.2" width="2.0" height="0.8" fill="#d9ddec"/><rect x="21.8" y="19.2" width="3.6" height="0.8" fill="#d9ddec"/><rect x="26.6" y="19.2" width="8.0" height="0.8" fill="#d9ddec"/><rect x="35.5" y="19.2" width="5.5" height="0.8" fill="#d9ddec"/><rect x="42.2" y="19.2" width="8.9" height="0.8" fill="#d9ddec"/><rect x="52.2" y="19.2" width="4.8" height="0.8" fill="#d9ddec"/><rect x="58.1" y="19.2" width="8.0" height="0.8" fill="#d9ddec"/><rect x="66.9" y="19.2" width="4.2" height="0.8" fill="#d9ddec"/><rect x="72.0" y="19.2" width="6.3" height="0.8" fill="#d9ddec"/><rect x="79.3" y="19.2" width="6.0" height="0.8" fill="#d9ddec"/><rect x="85.9" y="19.2" width="8.5" height="0.8" fill="#d9ddec"/><rect x="19.0" y="21.1" width="7.0" height="0.8" fill="#e3e3e3"/><rect x="26.8" y="21.1" width="3.1" height="0.8" fill="#e3e3e3"/><rect x="30.7" y="21.1" width="5.8" height="0.8" fill="#e3e3e3"/><rect x="37.5" y="21.1" width="4.3" height="0.8" fill="#e3e3e3"/><rect x="42.6" y="21.1" width="8.9" height="0.8" fill="#e3e3e3"/><rect x="52.4" y="21.1" width="6.4" height="0.8" fill="#e3e3e3"/><rect x="60.0" y="21.1" width="7.1" height="0.8" fill="#e3e3e3"/><rect x="68.0" y="21.1" width="7.8" height="0.8" fill="#e3e3e3"/><rect x="76.8" y="21.1" width="8.4" height="0.8" fill="#e3e3e3"/><rect x="86.2" y="21.1" width="6.2" height="0.8" fill="#e3e3e3"/><rect x="93.3" y="21.1" width="3.7" height="0.8" fill="#e3e3e3"/><rect x="19.0" y="23.0" width="9.0" height="0.8" fill="#d9ddec"/><rect x="28.6" y="23.0" width="8.4" height="0.8" fill="#d9ddec"/><rect x="38.1" y="23.0" width="7.5" height="0.8" fill="#d9ddec"/><rect x="46.2" y="23.0" width="6.5" height="0.8" fill="#d9ddec"/><rect x="53.5" y="23.0" width="5.1" height="0.8" fill="#d9ddec"/><rect x="19.0" y="26.5" width="3.1" height="0.8" fill="#d9ddec"/><rect x="23.2" y="26.5" width="2.4" height="0.8" fill="#d9ddec"/><rect x="26.5" y="26.5" width="4.9" height="0.8" fill="#d9ddec"/><rect x="32.5" y="26.5" width="4.6" height="0.8" fill="#d9ddec"/><rect x="38.1" y="26.5" width="5.5" height="0.8" fill="#d9ddec"/><rect x="44.5" y="26.5" width="5.3" height="0.8" fill="#d9ddec"/><rect x="50.7" y="26.5" width="6.2" height="0.8" fill="#d9ddec"/><rect x="57.7" y="26.5" width="5.0" height="0.8" fill="#d9ddec"/><rect x="63.8" y="26.5" width="8.8" height="0.8" fill="#d9ddec"/><rect x="73.4" y="26.5" width="8.6" height="0.8" fill="#d9ddec"/><rect x="82.6" y="26.5" width="4.3" height="0.8" fill="#d9ddec"/><rect x="88.1" y="26.5" width="3.2" height="0.8" fill="#d9ddec"/><rect x="92.3" y="26.5" width="4.7" height="0.8" fill="#d9ddec"/><rect x="19.0" y="28.4" width="5.2" height="0.8" fill="#d9ddec"/><rect x="25.0" y="28.4" width="7.5" height="0.8" fill="#d9ddec"/><rect x="33.4" y="28.4" width="7.6" height="0.8" fill="#d9ddec"/><rect x="41.9" y="28.4" width="6.4" height="0.8" fill="#d9ddec"/><rect x="49.4" y="28.4" width="3.2" height="0.8" fill="#d9ddec"/><rect x="53.7" y="28.4" width="5.2" height="0.8" fill="#d9ddec"/><rect x="59.8" y="28.4" width="5.9" height="0.8" fill="#d9ddec"/><rect x="19.0" y="31.9" width="7.3" height="0.8" fill="#e3e3e3"/><rect x="27.2" y="31.9" width="6.6" height="0.8" fill="#e3e3e3"/><rect x="34.9" y="31.9" width="6.8" height="0.8" fill="#e3e3e3"/><rect x="42.4" y="31.9" width="8.0" height="0.8" fill="#e3e3e3"/><rect x="51.3" y="31.9" width="3.2" height="0.8" fill="#e3e3e3"/><rect x="55.7" y="31.9" width="8.3" height="0.8" fill="#e3e3e3"/><rect x="64.7" y="31.9" width="8.2" height="0.8" fill="#e3e3e3"/><rect x="73.9" y="31.9" width="3.9" height="0.8" fill="#e3e3e3"/><rect x="78.7" y="31.9" width="8.5" height="0.8" fill="#e3e3e3"/><rect x="87.9" y="31.9" width="6.6" height="0.8" fill="#e3e3e3"/><rect x="22.0" y="33.8" width="6.6" height="0.8" fill="#dedede"/><rect x="29.7" y="33.8" width="4.8" height="0.8" fill="#dedede"/><rect x="35.3" y="33.8" width="6.3" height="0.8" fill="#dedede"/><rect x="42.7" y="33.8" width="5.0" height="0.8" fill="#dedede"/><rect x="22.0" y="37.3" width="7.4" height="0.8" fill="#dcdcdc"/><rect x="30.2" y="37.3" width="4.7" height="0.8" fill="#dcdcdc"/><rect x="36.1" y="37.3" width="4.6" height="0.8" fill="#dcdcdc"/><rect x="41.7" y="37.3" width="2.7" height="0.8" fill="#dcdcdc"/><rect x="45.1" y="37.3" width="3.6" height="0.8" fill="#dcdcdc"/><rect x="49.6" y="37.3" width="3.6" height="0.8" fill="#dcdcdc"/><rect x="54.2" y="37.3" width="2.5" height="0.8" fill="#dcdcdc"/><rect x="57.8" y="37.3" width="6.9" height="0.8" fill="#dcdcdc"/><rect x="65.4" y="37.3" width="3.7" height="0.8" fill="#dcdcdc"/><rect x="69.9" y="37.3" width="5.5" height="0.8" fill="#dcdcdc"/><rect x="76.0" y="37.3" width="3.6" height="0.8" fill="#dcdcdc"/><rect x="80.7" y="37.3" width="8.6" height="0.8" fill="#dcdcdc"/><rect x="90.0" y="37.3" width="5.6" height="0.8" fill="#dcdcdc"/><rect x="22.0" y="39.2" width="6.4" height="0.8" fill="#d9ddec"/><rect x="29.4" y="39.2" width="2.3" height="0.8" fill="#d9ddec"/><rect x="32.8" y="39.2" width="3.6" height="0.8" fill="#d9ddec"/><rect x="37.2" y="39.2" width="4.8" height="0.8" fill="#d9ddec"/><rect x="42.8" y="39.2" width="6.1" height="0.8" fill="#d9ddec"/><rect x="49.9" y="39.2" width="4.2" height="0.8" fill="#d9ddec"/><rect x="55.0" y="39.2" width="6.6" height="0.8" fill="#d9ddec"/><rect x="62.7" y="39.2" width="4.7" height="0.8" fill="#d9ddec"/><rect x="68.0" y="39.2" width="8.0" height="0.8" fill="#d9ddec"/><rect x="77.1" y="39.2" width="7.9" height="0.8" fill="#d9ddec"/><rect x="86.0" y="39.2" width="4.9" height="0.8" fill="#d9ddec"/><rect x="91.5" y="39.2" width="5.5" height="0.8" fill="#d9ddec"/><rect x="19.0" y="41.1" width="6.4" height="0.8" fill="#dedede"/><rect x="26.0" y="41.1" width="4.7" height="0.8" fill="#dedede"/><rect x="31.7" y="41.1" width="7.6" height="0.8" fill="#dedede"/><rect x="40.1" y="41.1" width="3.4" height="0.8" fill="#dedede"/><rect x="44.3" y="41.1" width="7.7" height="0.8" fill="#dedede"/><rect x="52.7" y="41.1" width="3.0" height="0.8" fill="#dedede"/><rect x="56.5" y="41.1" width="8.7" height="0.8" fill="#dedede"/><rect x="66.3" y="41.1" width="8.8" height="0.8" fill="#dedede"/><rect x="75.7" y="41.1" width="5.5" height="0.8" fill="#dedede"/><rect x="81.9" y="41.1" width="6.1" height="0.8" fill="#dedede"/><rect x="89.0" y="41.1" width="5.4" height="0.8" fill="#dedede"/><rect x="22.0" y="43.0" width="9.0" height="0.8" fill="#dcdcdc"/><rect x="32.0" y="43.0" width="3.5" height="0.8" fill="#dcdcdc"/><rect x="36.6" y="43.0" width="8.7" height="0.8" fill="#dcdcdc"/><rect x="46.1" y="43.0" width="4.3" height="0.8" fill="#dcdcdc"/><rect x="51.5" y="43.0" width="2.3" height="0.8" fill="#dcdcdc"/><rect x="54.9" y="43.0" width="5.8" height="0.8" fill="#dcdcdc"/><rect x="61.6" y="43.0" width="8.5" height="0.8" fill="#dcdcdc"/><rect x="71.1" y="43.0" width="7.4" height="0.8" fill="#dcdcdc"/><rect x="19.0" y="46.5" width="3.7" height="0.8" fill="#dedede"/><rect x="23.6" y="46.5" width="7.3" height="0.8" fill="#dedede"/><rect x="31.7" y="46.5" width="6.4" height="0.8" fill="#dedede"/><rect x="39.1" y="46.5" width="4.7" height="0.8" fill="#dedede"/><rect x="44.9" y="46.5" width="6.7" height="0.8" fill="#dedede"/><rect x="52.6" y="46.5" width="7.1" height="0.8" fill="#dedede"/><rect x="60.7" y="46.5" width="3.2" height="0.8" fill="#dedede"/><rect x="65.0" y="46.5" width="8.6" height="0.8" fill="#dedede"/><rect x="74.3" y="46.5" width="4.6" height="0.8" fill="#dedede"/><rect x="79.6" y="46.5" width="2.9" height="0.8" fill="#dedede"/><rect x="83.5" y="46.5" width="5.0" height="0.8" fill="#dedede"/><rect x="22.0" y="50.0" width="9.0" height="0.8" fill="#dedede"/><rect x="32.1" y="50.0" width="4.6" height="0.8" fill="#dedede"/><rect x="37.4" y="50.0" width="4.3" height="0.8" fill="#dedede"/><rect x="42.4" y="50.0" width="4.5" height="0.8" fill="#dedede"/><rect x="19.0" y="53.5" width="6.6" height="0.8" fill="#dcdcdc"/><rect x="26.6" y="53.5" width="3.2" height="0.8" fill="#dcdcdc"/><rect x="30.5" y="53.5" width="6.8" height="0.8" fill="#dcdcdc"/><rect x="38.2" y="53.5" width="6.1" height="0.8" fill="#dcdcdc"/><rect x="45.3" y="53.5" width="6.7" height="0.8" fill="#dcdcdc"/><rect x="53.2" y="53.5" width="4.6" height="0.8" fill="#dcdcdc"/><rect x="58.4" y="53.5" width="3.9" height="0.8" fill="#dcdcdc"/><rect x="63.5" y="53.5" width="3.7" height="0.8" fill="#dcdcdc"/><rect x="67.8" y="53.5" width="2.5" height="0.8" fill="#dcdcdc"/><rect x="71.5" y="53.5" width="3.5" height="0.8" fill="#dcdcdc"/><rect x="75.6" y="53.5" width="4.5" height="0.8" fill="#dcdcdc"/><rect x="80.8" y="53.5" width="7.1" height="0.8" fill="#dcdcdc"/><rect x="88.9" y="53.5" width="5.0" height="0.8" fill="#dcdcdc"/><rect x="94.9" y="53.5" width="2.1" height="0.8" fill="#dcdcdc"/><rect x="22.0" y="55.4" width="7.3" height="0.8" fill="#dedede"/><rect x="30.0" y="55.4" width="8.7" height="0.8" fill="#dedede"/><rect x="39.8" y="55.4" width="5.4" height="0.8" fill="#dedede"/><rect x="46.0" y="55.4" width="5.6" height="0.8" fill="#dedede"/><rect x="52.6" y="55.4" width="5.2" height="0.8" fill="#dedede"/><rect x="58.8" y="55.4" width="8.7" height="0.8" fill="#dedede"/><rect x="68.5" y="55.4" width="4.7" height="0.8" fill="#dedede"/><rect x="74.3" y="55.4" width="7.5" height="0.8" fill="#dedede"/><rect x="82.4" y="55.4" width="5.5" height="0.8" fill="#dedede"/><rect x="88.7" y="55.4" width="4.1" height="0.8" fill="#dedede"/><rect x="93.6" y="55.4" width="3.4" height="0.8" fill="#dedede"/><rect x="19.0" y="57.3" width="7.5" height="0.8" fill="#dedede"/><rect x="27.3" y="57.3" width="4.3" height="0.8" fill="#dedede"/><rect x="32.7" y="57.3" width="6.4" height="0.8" fill="#dedede"/><rect x="39.9" y="57.3" width="3.2" height="0.8" fill="#dedede"/><rect x="44.0" y="57.3" width="4.1" height="0.8" fill="#dedede"/><rect x="48.7" y="57.3" width="4.7" height="0.8" fill="#dedede"/><rect x="54.5" y="57.3" width="3.6" height="0.8" fill="#dedede"/><rect x="58.9" y="57.3" width="8.7" height="0.8" fill="#dedede"/><rect x="68.3" y="57.3" width="3.4" height="0.8" fill="#dedede"/><rect x="72.9" y="57.3" width="4.5" height="0.8" fill="#dedede"/><rect x="78.5" y="57.3" width="6.6" height="0.8" fill="#dedede"/><rect x="86.2" y="57.3" width="3.6" height="0.8" fill="#dedede"/><rect x="90.8" y="57.3" width="6.2" height="0.8" fill="#dedede"/><rect x="19.0" y="59.2" width="2.4" height="0.8" fill="#e3e3e3"/><rect x="22.4" y="59.2" width="7.3" height="0.8" fill="#e3e3e3"/><rect x="30.8" y="59.2" width="4.2" height="0.8" fill="#e3e3e3"/><rect x="35.8" y="59.2" width="4.2" height="0.8" fill="#e3e3e3"/><rect x="41.0" y="59.2" width="3.9" height="0.8" fill="#e3e3e3"/><rect x="46.1" y="59.2" width="3.6" height="0.8" fill="#e3e3e3"/><rect x="60" y="10" width="38" height="30" fill="#fff" stroke="#e6e6e6" stroke-width="0.5"/><g fill="#9cc0d8"><rect x="78" y="12" width="6" height="2"/><rect x="68" y="19" width="7" height="2"/><rect x="86" y="22" width="6" height="2"/><rect x="63" y="27" width="6" height="2"/><rect x="78" y="27" width="6" height="2"/><rect x="89" y="32" width="6" height="2"/><rect x="72" y="35" width="6" height="2"/></g><path d="M81 14 L71 19 M81 14 L89 22 M71 21 L66 27 M71 21 L81 27 M89 24 L92 32 M81 29 L75 35" stroke="#aaa" stroke-width="0.4"/><rect x="99.6" y="4" width="1.6" height="75" fill="#ececec"/><rect x="99.6" y="18" width="1.6" height="12" fill="#c9c9c9"/><rect x="0" y="0" width="0.8" height="79" fill="#c6c6c6"/><rect x="101.2" y="0" width="0.8" height="79" fill="#c6c6c6"/><rect x="0" y="78" width="102" height="1" fill="#c2b294"/><rect x="0" y="78" width="20" height="1" fill="#a89a80"/></svg>
</div>

</body></html>
